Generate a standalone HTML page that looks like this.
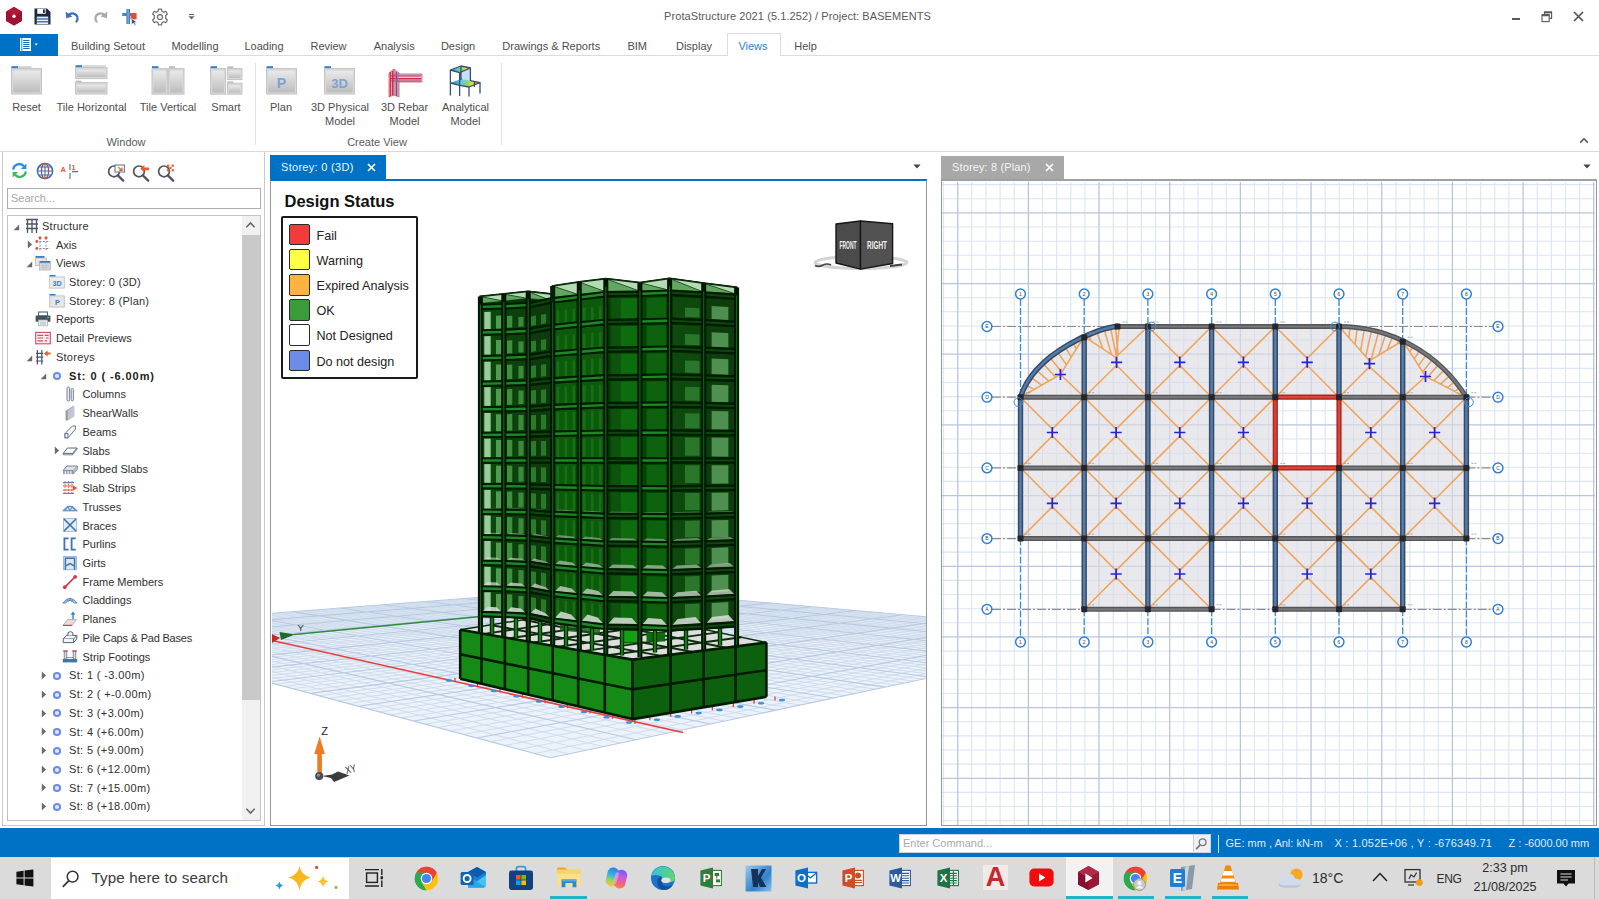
<!DOCTYPE html>
<html lang="en"><head><meta charset="utf-8"><title>ProtaStructure 2021 (5.1.252) / Project: BASEMENTS</title>
<style>
*{box-sizing:border-box;margin:0;padding:0}
html,body{width:1599px;height:899px;overflow:hidden;background:#fff}
body{font-family:"Liberation Sans",sans-serif;font-size:11px;color:#3c3c3c}
#app{position:relative;width:1599px;height:899px;overflow:hidden;background:#fff}
.a{position:absolute}
.t{position:absolute;white-space:nowrap;line-height:1}
svg{position:absolute;overflow:visible}

</style></head>
<body>
<div id="app">
<!-- titlebar -->
<svg style="left:5px;top:7px" width="18" height="19" viewBox="0 0 18 19">
<path d="M9 0.8 L16.2 4.9 L16.2 13.6 L9 17.8 L1.8 13.6 L1.8 4.9 Z" fill="#a3102f" stroke="#a3102f" stroke-width="1.6" stroke-linejoin="round"/>
<path d="M9 0.8 L16.2 4.9 L9 9.3 L1.8 4.9Z" fill="#b8203c" opacity=".55"/>
<circle cx="9" cy="9.3" r="1.7" fill="#fff"/></svg>
<svg style="left:34px;top:8px" width="17" height="17" viewBox="0 0 17 17">
<path d="M0.5 0.5 H13 L16.5 4 V16.5 H0.5Z" fill="#1d2740"/>
<rect x="3.3" y="0.8" width="8.4" height="5" fill="#fff"/><rect x="9" y="1.4" width="1.8" height="3.6" fill="#1d2740"/>
<rect x="2.8" y="8.6" width="11.4" height="7.4" fill="#e9eef7"/>
<rect x="2.8" y="10.2" width="11.4" height="1.5" fill="#4a78c0"/><rect x="2.8" y="13" width="11.4" height="1.5" fill="#4a78c0"/></svg>
<svg style="left:64px;top:9px" width="17" height="15" viewBox="0 0 17 15">
<path d="M4.2 6.4 C7.5 3.2 12.2 4.2 13.4 8 C13.9 9.8 13.4 11.4 12.4 12.7" fill="none" stroke="#3f6fb6" stroke-width="2.2" stroke-linecap="round"/>
<path d="M1.6 2.6 L2.2 9.2 L8.4 7.6 Z" fill="#3f6fb6"/></svg>
<svg style="left:92px;top:9px" width="17" height="15" viewBox="0 0 17 15">
<path d="M12.8 6.4 C9.5 3.2 4.8 4.2 3.6 8 C3.1 9.8 3.6 11.4 4.6 12.7" fill="none" stroke="#a9a9a9" stroke-width="2.2" stroke-linecap="round"/>
<path d="M15.4 2.6 L14.8 9.2 L8.6 7.6 Z" fill="#a9a9a9"/></svg>
<svg style="left:121px;top:8px" width="18" height="18" viewBox="0 0 18 18">
<rect x="5.4" y="1" width="3.6" height="15" fill="#3d78b8"/><rect x="1.2" y="5" width="12" height="3" fill="#4b86c4"/>
<rect x="9.6" y="5" width="6" height="6.4" fill="#d9503c"/><path d="M10.6 10.6 L10.6 16.6 L12.4 15 L13.8 17.4 L14.8 16.8 L13.5 14.5 L15.8 14.2Z" fill="#2c4f7c" stroke="#fff" stroke-width=".5"/>
<rect x="6.6" y="1" width="1" height="15" fill="#9cc0e6"/></svg>
<svg style="left:151px;top:8px" width="18" height="18" viewBox="-9 -9 18 18">
<g fill="none" stroke="#6f6f6f" stroke-width="1.25" stroke-linejoin="round">
<path d="M-1.5 -7.8 H1.5 L2 -5.6 L3.7 -4.7 L5.8 -5.6 L7.4 -3 L5.7 -1.5 V1.5 L7.4 3 L5.8 5.6 L3.7 4.7 L2 5.6 L1.5 7.8 H-1.5 L-2 5.6 L-3.7 4.7 L-5.8 5.6 L-7.4 3 L-5.7 1.5 V-1.5 L-7.4 -3 L-5.8 -5.6 L-3.7 -4.7 L-2 -5.6 Z"/>
<circle r="2.5"/></g></svg>
<div class="a" style="left:188.6px;top:13.6px;width:5.6px;height:1.2px;background:#666;"></div>
<svg style="left:188px;top:15.6px" width="7" height="4" viewBox="0 0 7 4"><path d="M0.4 0.2 H6.6 L3.5 3.6Z" fill="#666"/></svg>
<span class="t" style="left:797.5px;top:11px;font-size:11px;color:#595959;letter-spacing:0.08px;transform:translateX(-50%);">ProtaStructure 2021 (5.1.252) / Project: BASEMENTS</span>
<div class="a" style="left:1512px;top:17.8px;width:8.4px;height:1.8px;background:#5a5a5a;"></div>
<svg style="left:1541px;top:11px" width="12" height="12" viewBox="0 0 12 12">
<g fill="none" stroke="#5a5a5a" stroke-width="1.1"><path d="M3.4 3 V0.9 H10.6 V7.4 H8.2"/><path d="M3.4 1.7 H10.6" stroke-width="1.4"/><rect x="1" y="3.6" width="7.2" height="7"/><path d="M1 4.5 H8.2" stroke-width="1.5"/></g></svg>
<svg style="left:1573px;top:11px" width="11" height="11" viewBox="0 0 11 11">
<path d="M1 1 L10 10 M10 1 L1 10" stroke="#555" stroke-width="1.7" fill="none"/></svg>
<!-- ribbon -->
<div class="a" style="left:0px;top:33.5px;width:58.3px;height:22.3px;background:#0072c6;"></div>
<svg style="left:19px;top:37px" width="22" height="15" viewBox="0 0 22 15">
<rect x="1" y="1" width="11" height="13" fill="#fff"/><g stroke="#0a6fc4" stroke-width="1"><path d="M4.2 3.5H10.5M4.2 5.5H10.5M4.2 7.5H10.5M4.2 9.5H10.5M4.2 11.5H10.5"/><path d="M2.8 1V14" stroke-width=".8"/></g>
<path d="M15.6 6.6 H18.8 L17.2 8.6Z" fill="#fff"/></svg>
<div class="a" style="left:58px;top:55px;width:1541px;height:1px;background:#dcdcdc;"></div>
<div class="a" style="left:727px;top:33px;width:53.5px;height:23px;background:#fff;border:1px solid #dcdcdc;border-bottom:none;"></div>
<span class="t" style="left:108.0px;top:40.5px;font-size:11px;color:#4d4d4d;transform:translateX(-50%);">Building Setout</span>
<span class="t" style="left:195.0px;top:40.5px;font-size:11px;color:#4d4d4d;transform:translateX(-50%);">Modelling</span>
<span class="t" style="left:264.0px;top:40.5px;font-size:11px;color:#4d4d4d;transform:translateX(-50%);">Loading</span>
<span class="t" style="left:328.5px;top:40.5px;font-size:11px;color:#4d4d4d;transform:translateX(-50%);">Review</span>
<span class="t" style="left:394.25px;top:40.5px;font-size:11px;color:#4d4d4d;transform:translateX(-50%);">Analysis</span>
<span class="t" style="left:458.0px;top:40.5px;font-size:11px;color:#4d4d4d;transform:translateX(-50%);">Design</span>
<span class="t" style="left:551.25px;top:40.5px;font-size:11px;color:#4d4d4d;transform:translateX(-50%);">Drawings &amp; Reports</span>
<span class="t" style="left:637.25px;top:40.5px;font-size:11px;color:#4d4d4d;transform:translateX(-50%);">BIM</span>
<span class="t" style="left:694.0px;top:40.5px;font-size:11px;color:#4d4d4d;transform:translateX(-50%);">Display</span>
<span class="t" style="left:753.0px;top:40.5px;font-size:11px;color:#2f7fcf;transform:translateX(-50%);">Views</span>
<span class="t" style="left:805.5px;top:40.5px;font-size:11px;color:#4d4d4d;transform:translateX(-50%);">Help</span>
<div class="a" style="left:0px;top:151px;width:1599px;height:1px;background:#dadada;"></div>
<div class="a" style="left:254.5px;top:63px;width:1px;height:82px;background:#e1e1e1;"></div>
<div class="a" style="left:500.5px;top:63px;width:1px;height:82px;background:#e1e1e1;"></div>
<span class="t" style="left:126px;top:137px;font-size:11px;color:#5a5a5a;transform:translateX(-50%);">Window</span>
<span class="t" style="left:377px;top:137px;font-size:11px;color:#5a5a5a;transform:translateX(-50%);">Create View</span>
<svg style="left:1579px;top:137px" width="10" height="7" viewBox="0 0 10 7"><path d="M1.2 5.6 L5 1.8 L8.8 5.6" fill="none" stroke="#555" stroke-width="1.6"/></svg>
<span class="t" style="left:26.5px;top:102px;font-size:11px;color:#4d4d4d;transform:translateX(-50%);">Reset</span>
<span class="t" style="left:91.5px;top:102px;font-size:11px;color:#4d4d4d;transform:translateX(-50%);">Tile Horizontal</span>
<span class="t" style="left:168px;top:102px;font-size:11px;color:#4d4d4d;transform:translateX(-50%);">Tile Vertical</span>
<span class="t" style="left:226px;top:102px;font-size:11px;color:#4d4d4d;transform:translateX(-50%);">Smart</span>
<span class="t" style="left:281px;top:102px;font-size:11px;color:#4d4d4d;transform:translateX(-50%);">Plan</span>
<span class="t" style="left:340px;top:102px;font-size:11px;color:#4d4d4d;transform:translateX(-50%);">3D Physical</span>
<span class="t" style="left:340px;top:115.5px;font-size:11px;color:#4d4d4d;transform:translateX(-50%);">Model</span>
<span class="t" style="left:404.5px;top:102px;font-size:11px;color:#4d4d4d;transform:translateX(-50%);">3D Rebar</span>
<span class="t" style="left:404.5px;top:115.5px;font-size:11px;color:#4d4d4d;transform:translateX(-50%);">Model</span>
<span class="t" style="left:465.5px;top:102px;font-size:11px;color:#4d4d4d;transform:translateX(-50%);">Analytical</span>
<span class="t" style="left:465.5px;top:115.5px;font-size:11px;color:#4d4d4d;transform:translateX(-50%);">Model</span>
<svg style="left:10px;top:64px" width="34" height="32" viewBox="0 0 34 32"><defs><linearGradient id="wg" x1="0" y1="0" x2="0" y2="1"><stop offset="0" stop-color="#e9e9e9"/><stop offset="1" stop-color="#bdbdbd"/></linearGradient></defs><rect x="1.5" y="2.2" width="20" height="2.4" fill="#d0d0d0"/><rect x="1.5" y="2.2" width="6.5" height="2.4" fill="#2f7fd0"/><rect x="1.5" y="4.6" width="30" height="25.4" fill="#d9d9d9" stroke="#c4c4c4" stroke-width="1"/><rect x="3.1" y="6.8" width="26.8" height="21.599999999999998" fill="url(#wg)"/></svg>
<svg style="left:74px;top:64px" width="36" height="32" viewBox="0 0 36 32"><rect x="1.5" y="1.2" width="6.5" height="2.4" fill="#2f7fd0"/><rect x="8" y="1.2" width="24" height="2.4" fill="#d6d6d6"/><rect x="1.5" y="3.6" width="31.5" height="11" fill="#d9d9d9" stroke="#c4c4c4" stroke-width="1"/><rect x="3.1" y="5.800000000000001" width="28.3" height="7.2" fill="url(#wg)"/><rect x="1.5" y="16.6" width="6" height="2" fill="#bdbdbd"/><rect x="1.5" y="18.6" width="31.5" height="11.4" fill="#d9d9d9" stroke="#c4c4c4" stroke-width="1"/><rect x="3.1" y="20.8" width="28.3" height="7.6000000000000005" fill="url(#wg)"/></svg>
<svg style="left:150px;top:64px" width="36" height="32" viewBox="0 0 36 32"><rect x="2" y="2.2" width="6.5" height="2.4" fill="#2f7fd0"/><rect x="19" y="2.2" width="6" height="2.2" fill="#bdbdbd"/><rect x="2" y="4.6" width="15.4" height="25.6" fill="#d9d9d9" stroke="#c4c4c4" stroke-width="1"/><rect x="3.6" y="6.8" width="12.2" height="21.8" fill="url(#wg)"/><rect x="18.6" y="4.6" width="15.4" height="25.6" fill="#d9d9d9" stroke="#c4c4c4" stroke-width="1"/><rect x="20.200000000000003" y="6.8" width="12.2" height="21.8" fill="url(#wg)"/></svg>
<svg style="left:208px;top:64px" width="36" height="32" viewBox="0 0 36 32"><rect x="2.5" y="2.2" width="6.5" height="2.4" fill="#2f7fd0"/><rect x="19.4" y="2.4" width="6" height="2" fill="#bdbdbd"/><rect x="2.5" y="4.6" width="15" height="25.6" fill="#d9d9d9" stroke="#c4c4c4" stroke-width="1"/><rect x="4.1" y="6.8" width="11.8" height="21.8" fill="url(#wg)"/><rect x="19.4" y="4.6" width="14.6" height="11" fill="#d9d9d9" stroke="#c4c4c4" stroke-width="1"/><rect x="21.0" y="6.8" width="11.399999999999999" height="7.2" fill="url(#wg)"/><rect x="19.4" y="17.4" width="6" height="1.8" fill="#bdbdbd"/><rect x="19.4" y="19.2" width="14.6" height="11" fill="#d9d9d9" stroke="#c4c4c4" stroke-width="1"/><rect x="21.0" y="21.4" width="11.399999999999999" height="7.2" fill="url(#wg)"/></svg>
<svg style="left:265px;top:64px" width="34" height="32" viewBox="0 0 34 32"><rect x="1.5" y="2.2" width="6.5" height="2.4" fill="#2f7fd0"/><rect x="1.5" y="4.6" width="30" height="25.4" fill="#d9d9d9" stroke="#c4c4c4" stroke-width="1"/><rect x="3.1" y="6.8" width="26.8" height="21.599999999999998" fill="url(#wg)"/><text x="16.5" y="24" font-family="Liberation Sans,sans-serif" font-weight="bold" font-size="14" fill="#7aa3d6" text-anchor="middle">P</text></svg>
<svg style="left:323px;top:64px" width="34" height="32" viewBox="0 0 34 32"><rect x="1.5" y="2.2" width="6.5" height="2.4" fill="#2f7fd0"/><rect x="1.5" y="4.6" width="30" height="25.4" fill="#d9d9d9" stroke="#c4c4c4" stroke-width="1"/><rect x="3.1" y="6.8" width="26.8" height="21.599999999999998" fill="url(#wg)"/><text x="16.5" y="23.6" font-family="Liberation Sans,sans-serif" font-weight="bold" font-size="13" fill="#7aa3d6" text-anchor="middle">3D</text></svg>
<svg style="left:386px;top:64px" width="38" height="34" viewBox="0 0 38 34">
<path d="M3 9 L8 5 L8 31 L3 33 Z" fill="#f3a4ae" stroke="#d2566a" stroke-width=".8"/>
<path d="M8 5 L13 9 L13 33 L8 31Z" fill="#f7c3ca" stroke="#d2566a" stroke-width=".8"/>
<path d="M8 10 L36 10 L36 18 L13 18 Z" fill="#f8c6cc" stroke="#d2566a" stroke-width=".8"/>
<g stroke="#c92c48" stroke-width="1.1"><path d="M5 12H35M5 14.6H35M5 17H35"/><path d="M4.4 8V32M6.6 7V31.6M10.6 8V32"/></g>
<g stroke="#5b8fd0" stroke-width=".9"><path d="M9 11.2H35M9 15.8H35"/><path d="M9.2 7V32M12 9V32"/></g></svg>
<svg style="left:447px;top:63px" width="38" height="36" viewBox="0 0 38 36">
<defs><linearGradient id="rb" x1="0" y1="0" x2="1" y2="0"><stop offset="0" stop-color="#3a6fe0"/><stop offset=".3" stop-color="#3ec6e0"/><stop offset=".55" stop-color="#7fd86a"/><stop offset=".75" stop-color="#f2d84a"/><stop offset="1" stop-color="#e8604a"/></linearGradient></defs>
<path d="M3.4 7 L14 3 L23.4 5 L12.6 9.6Z" fill="url(#rb)"/>
<path d="M3.4 20 L14 16 L33 19.6 L22 24Z" fill="url(#rb)"/>
<path d="M12.6 9.6 L23.4 5 L23.4 17.6 L12.6 21.6Z" fill="#8fc8ee" fill-opacity=".55"/>
<g stroke="#3b4f6c" stroke-width="1.3" fill="none" stroke-linejoin="round"><path d="M3.4 7V32.4M14 3V17M23.4 5V18M12.6 9.6V33M22 24V33.4M33 19.6V30.6M27.4 18.6V24"/>
<path d="M3.4 7L14 3L23.4 5L12.6 9.6Z"/><path d="M3.4 20L12.6 22.4L22 24L33 19.6L23.4 17.6"/></g></svg>
<!-- leftpanel -->
<div class="a" style="left:2px;top:152px;width:1px;height:674px;background:#c9c9c9;"></div>
<div class="a" style="left:264px;top:152px;width:1px;height:674px;background:#c9c9c9;"></div>
<div class="a" style="left:2px;top:825px;width:263px;height:1px;background:#c9c9c9;"></div>
<svg style="left:11px;top:162px" width="17" height="17" viewBox="0 0 17 17">
<path d="M2.2 7.6 A6.2 6.2 0 0 1 13 4.2" fill="none" stroke="#2b8fe0" stroke-width="2.4"/><path d="M15.4 1.4 V7 H9.8Z" fill="#2b8fe0"/>
<path d="M14.8 9.4 A6.2 6.2 0 0 1 4 12.8" fill="none" stroke="#3cb860" stroke-width="2.4"/><path d="M1.6 15.6 V10 H7.2Z" fill="#3cb860"/></svg>
<svg style="left:36px;top:162px" width="18" height="18" viewBox="0 0 18 18">
<circle cx="9" cy="9" r="7.6" fill="#fff" stroke="#3a6fb8" stroke-width="1.5"/>
<ellipse cx="9" cy="9" rx="3.6" ry="7.6" fill="none" stroke="#d8384f" stroke-width="1.2"/>
<path d="M9 1.4V16.6" stroke="#3a9a58" stroke-width="1.2"/><path d="M1.4 9H16.6M2.6 5H15.4M2.6 13H15.4" stroke="#3a6fb8" stroke-width="1.1"/></svg>
<svg style="left:60px;top:161px" width="20" height="20" viewBox="0 0 20 20">
<text x="0.6" y="11" font-family="Liberation Sans,sans-serif" font-weight="bold" font-size="7.4" fill="#e4573d">A</text>
<text x="11.6" y="8.6" font-family="Liberation Sans,sans-serif" font-weight="bold" font-size="7.4" fill="#e4573d">1</text>
<path d="M10 3V9M10 12V18M12 10.6H18" stroke="#5b6d84" stroke-width="1.1"/></svg>
<svg style="left:106.5px;top:163px" width="19" height="19" viewBox="0 0 19 19">
<circle cx="7" cy="8.4" r="5.4" fill="#fff" stroke="#4c5560" stroke-width="1.7"/><path d="M10.8 12.4L16.2 17.6" stroke="#4c5560" stroke-width="2.3" stroke-linecap="round"/><rect x="8" y="2" width="9.4" height="7" fill="#fff" stroke="#5b6d84" stroke-width="1"/><path d="M11.4 4.2L15 7.4M15 4.6V7.4H12.2" stroke="#e4573d" stroke-width="1.2" fill="none"/></svg>
<svg style="left:132px;top:163px" width="19" height="19" viewBox="0 0 19 19">
<circle cx="7" cy="8.4" r="5.4" fill="#fff" stroke="#4c5560" stroke-width="1.7"/><path d="M10.8 12.4L16.2 17.6" stroke="#4c5560" stroke-width="2.3" stroke-linecap="round"/><path d="M8.4 5.8 L12.4 2 V4.4 H17 V7.2 H12.4 V9.6Z" fill="#ee5a2a"/></svg>
<svg style="left:157px;top:163px" width="19" height="19" viewBox="0 0 19 19">
<circle cx="7" cy="8.4" r="5.4" fill="#fff" stroke="#4c5560" stroke-width="1.7"/><path d="M10.8 12.4L16.2 17.6" stroke="#4c5560" stroke-width="2.3" stroke-linecap="round"/><g fill="#ee5a2a"><rect x="10" y="1.6" width="2.2" height="2.2"/><rect x="14.6" y="1.6" width="2.2" height="2.2"/><rect x="12.3" y="3.9" width="2.2" height="2.2"/><rect x="10" y="6.2" width="2.2" height="2.2"/><rect x="14.6" y="6.2" width="2.2" height="2.2"/></g></svg>
<div class="a" style="left:7px;top:188px;width:254px;height:21px;background:#fff;border:1px solid #adadad;"></div>
<span class="t" style="left:11px;top:193px;font-size:11px;color:#a6a6a6;">Search...</span>
<div class="a" style="left:7px;top:215px;width:254px;height:606px;background:#fff;border:1px solid #c3c3c3;"></div>
<div class="a" style="left:241.5px;top:216px;width:18.5px;height:604px;background:#f1f1f1;"></div>
<div class="a" style="left:241.5px;top:234.5px;width:18.5px;height:465px;background:#c9c9c9;"></div>
<svg style="left:245px;top:221px" width="11" height="8" viewBox="0 0 11 8"><path d="M1.4 6.2L5.5 2L9.6 6.2" fill="none" stroke="#666" stroke-width="1.6"/></svg>
<svg style="left:245px;top:807px" width="11" height="8" viewBox="0 0 11 8"><path d="M1.4 1.8L5.5 6L9.6 1.8" fill="none" stroke="#666" stroke-width="1.6"/></svg>
<svg style="left:13px;top:223.5px" width="7" height="7" viewBox="0 0 7 7"><path d="M6.2 0.6V6.2H0.6Z" fill="#6a6a6a"/></svg>
<svg style="left:24px;top:217.6px" width="16" height="16" viewBox="0 0 16 16"><g stroke="#4a5568" stroke-width="1.3" fill="none"><path d="M2 1.5H14M2 6H14M2 10.5H14M3.5 1.5V15M8 1.5V15M12.5 1.5V15"/></g></svg>
<span class="t" style="left:42px;top:220.8px;font-size:11px;color:#2f2f2f;letter-spacing:0.25px;">Structure</span>
<svg style="left:27px;top:240.2px" width="6" height="9" viewBox="0 0 6 9"><path d="M0.8 0.6L5 4.5L0.8 8.4Z" fill="#6a6a6a"/></svg>
<svg style="left:35px;top:236.3px" width="16" height="16" viewBox="0 0 16 16"><g stroke="#7a8aa0" stroke-width="1" stroke-dasharray="2 1.4" fill="none"><path d="M5 2V15M11 2V15M1 5.5H15M1 12.5H15"/></g><g fill="#e0523a"><circle cx="5" cy="1.8" r="1.5"/><circle cx="11" cy="1.8" r="1.5"/><circle cx="1.8" cy="5.5" r="1.4"/><circle cx="1.8" cy="12.5" r="1.4"/></g></svg>
<span class="t" style="left:56px;top:239.5px;font-size:11px;color:#2f2f2f;">Axis</span>
<svg style="left:26px;top:261.0px" width="7" height="7" viewBox="0 0 7 7"><path d="M6.2 0.6V6.2H0.6Z" fill="#6a6a6a"/></svg>
<svg style="left:35px;top:255.1px" width="16" height="16" viewBox="0 0 16 16"><rect x="0.5" y="1" width="9" height="2" fill="#2f7fd0"/><rect x="0.5" y="3" width="11" height="7.6" fill="#e6e6e6" stroke="#b5b5b5" stroke-width=".7"/><rect x="4.5" y="6" width="11" height="2" fill="#2f7fd0"/><rect x="4.5" y="8" width="11" height="7" fill="#d8d8d8" stroke="#b0b0b0" stroke-width=".7"/><path d="M6 10.5H14M6 12.5H14M8 9V14.5M11 9V14.5" stroke="#bcbcbc" stroke-width=".6"/></svg>
<span class="t" style="left:56px;top:258.3px;font-size:11px;color:#2f2f2f;">Views</span>
<svg style="left:49px;top:273.8px" width="16" height="16" viewBox="0 0 16 16"><rect x="0.5" y="1" width="6" height="1.8" fill="#2f7fd0"/><rect x="0.7" y="2.9" width="14.6" height="11.2" fill="#e9eef5" stroke="#b3bccb" stroke-width=".8"/><text x="8" y="11.6" font-family="Liberation Sans,sans-serif" font-weight="bold" font-size="7.2" fill="#3b78c4" text-anchor="middle">3D</text></svg>
<span class="t" style="left:69px;top:277.0px;font-size:11px;color:#2f2f2f;letter-spacing:0.24px;">Storey: 0 (3D)</span>
<svg style="left:49px;top:292.5px" width="16" height="16" viewBox="0 0 16 16"><rect x="0.5" y="1" width="6" height="1.8" fill="#2f7fd0"/><rect x="0.7" y="2.9" width="14.6" height="11.2" fill="#e6e6e6" stroke="#b9b9b9" stroke-width=".8"/><text x="8.4" y="11.8" font-family="Liberation Sans,sans-serif" font-weight="bold" font-size="7.2" fill="#3b78c4" text-anchor="middle">P</text></svg>
<span class="t" style="left:69px;top:295.7px;font-size:11px;color:#2f2f2f;letter-spacing:0.24px;">Storey: 8 (Plan)</span>
<svg style="left:35px;top:311.2px" width="16" height="16" viewBox="0 0 16 16"><rect x="3.6" y="1" width="8.8" height="4" fill="#fff" stroke="#4a5a66" stroke-width="1"/><rect x="0.6" y="4.6" width="14.8" height="6.2" rx="1" fill="#42525e"/><rect x="3.4" y="9" width="9.2" height="5.8" fill="#f0f0f0" stroke="#9aa" stroke-width=".7"/><path d="M5 11.2H11M5 13H11" stroke="#9aa" stroke-width=".7"/><circle cx="13" cy="6.6" r=".8" fill="#7fd36a"/></svg>
<span class="t" style="left:56px;top:314.4px;font-size:11px;color:#2f2f2f;">Reports</span>
<svg style="left:35px;top:330.0px" width="16" height="16" viewBox="0 0 16 16"><rect x="0.7" y="2.4" width="14.6" height="11.4" fill="#fdeff1" stroke="#d8475f" stroke-width="1.1"/><g stroke="#d8475f" stroke-width="1.2"><path d="M2.4 5.4H8M2.4 8H8M2.4 10.8H8M9.6 5.4H13.6M11 8H13.6M9.6 10.8H12"/></g></svg>
<span class="t" style="left:56px;top:333.2px;font-size:11px;color:#2f2f2f;">Detail Previews</span>
<svg style="left:26px;top:354.6px" width="7" height="7" viewBox="0 0 7 7"><path d="M6.2 0.6V6.2H0.6Z" fill="#6a6a6a"/></svg>
<svg style="left:35px;top:348.7px" width="16" height="16" viewBox="0 0 16 16"><g stroke="#4a5568" stroke-width="1.2" fill="none"><path d="M2.4 1V15.5M6.8 1V15.5M1 4.4H8.2M1 8.2H8.2M1 12H8.2"/></g><path d="M9 4.4 L12.6 1.4 V3.4 H15.6 V5.4 H12.6 V7.4Z" fill="#ee5a2a"/></svg>
<span class="t" style="left:56px;top:351.9px;font-size:11px;color:#2f2f2f;letter-spacing:0.24px;">Storeys</span>
<svg style="left:40px;top:373.3px" width="7" height="7" viewBox="0 0 7 7"><path d="M6.2 0.6V6.2H0.6Z" fill="#6a6a6a"/></svg>
<svg style="left:52px;top:371.2px" width="10" height="10" viewBox="0 0 10 10"><circle cx="5" cy="5" r="3.1" fill="#dfe6fb" stroke="#6d8ce8" stroke-width="2"/></svg>
<span class="t" style="left:69px;top:370.6px;font-size:11px;color:#222;font-weight:bold;letter-spacing:0.92px;">St: 0 ( -6.00m)</span>
<svg style="left:62px;top:386.2px" width="16" height="16" viewBox="0 0 16 16"><g fill="#e8edf3" stroke="#6b7686" stroke-width=".9"><rect x="5" y="1" width="2.6" height="14" rx="1.2"/><rect x="9.2" y="2.4" width="2.2" height="12.4" rx="1.1"/></g></svg>
<span class="t" style="left:82.5px;top:389.4px;font-size:11px;color:#2f2f2f;">Columns</span>
<svg style="left:62px;top:404.9px" width="16" height="16" viewBox="0 0 16 16"><path d="M4 6 L11.4 1.2 V10.6 L4 15.2Z" fill="#aeb7c4" stroke="#8591a2" stroke-width=".7"/><path d="M4 6 L5.8 6.8 V15.8 L4 15.2Z" fill="#8e99aa"/><path d="M11.4 1.2 L12.6 2 V11.4 L5.8 15.8 V6.8Z" fill="#c3cad4" opacity=".9"/></svg>
<span class="t" style="left:82.5px;top:408.1px;font-size:11px;color:#2f2f2f;">ShearWalls</span>
<svg style="left:62px;top:423.6px" width="16" height="16" viewBox="0 0 16 16"><g fill="#f4f6f8" stroke="#6b7686" stroke-width="1"><path d="M3 9.6 L10.4 2 H13.4 L13.4 5.2 L6 13.8 H3Z"/><rect x="3" y="9.6" width="3" height="4.2"/></g></svg>
<span class="t" style="left:82.5px;top:426.8px;font-size:11px;color:#2f2f2f;">Beams</span>
<svg style="left:54px;top:446.3px" width="6" height="9" viewBox="0 0 6 9"><path d="M0.8 0.6L5 4.5L0.8 8.4Z" fill="#6a6a6a"/></svg>
<svg style="left:62px;top:442.4px" width="16" height="16" viewBox="0 0 16 16"><path d="M1.2 11.4 L5.4 6 H15 L10.6 11.4Z" fill="#f7f8fa" stroke="#5f6a7a" stroke-width="1"/><path d="M1.2 11.4V12.8H10.6V11.4M10.6 12.8L15 7.2V6" fill="none" stroke="#5f6a7a" stroke-width=".8"/></svg>
<span class="t" style="left:82.5px;top:445.6px;font-size:11px;color:#2f2f2f;">Slabs</span>
<svg style="left:62px;top:461.1px" width="16" height="16" viewBox="0 0 16 16"><path d="M1 9.6 L5 5 H15.4 L11.2 9.6Z" fill="#dfe3e8" stroke="#6b7686" stroke-width=".9"/><g fill="#9aa4b3"><rect x="1" y="9.8" width="1.8" height="3.4"/><rect x="3.8" y="9.8" width="1.8" height="3.4"/><rect x="6.6" y="9.8" width="1.8" height="3.4"/><rect x="9.4" y="9.8" width="1.8" height="3.4"/></g><path d="M11.2 9.6V13L15.4 8.4V5" fill="#b8c0cb" stroke="#6b7686" stroke-width=".6"/></svg>
<span class="t" style="left:82.5px;top:464.3px;font-size:11px;color:#2f2f2f;">Ribbed Slabs</span>
<svg style="left:62px;top:479.8px" width="16" height="16" viewBox="0 0 16 16"><g stroke="#5b84c4" stroke-width="1.1"><path d="M1 2.6H12M1 13.4H12"/></g><g stroke="#e0523a" stroke-width="1.2"><path d="M1 6H11.5M1 10H11.5"/><path d="M3 1V15M6.6 1V15M10 1V15" stroke-width=".9" stroke-dasharray="1.6 1.2"/></g><path d="M11 5.4 L15.6 8 L11 10.6Z" fill="#e0523a"/></svg>
<span class="t" style="left:82.5px;top:483.0px;font-size:11px;color:#2f2f2f;">Slab Strips</span>
<svg style="left:62px;top:498.6px" width="16" height="16" viewBox="0 0 16 16"><path d="M0.8 11.8 Q8 2.6 15.2 11.8 Z" fill="#c9dcf0" stroke="#4b7fb8" stroke-width="1"/><path d="M3 11.8L5.6 7.4L8 11.8L10.4 7.4L13 11.8" fill="none" stroke="#4b7fb8" stroke-width=".9"/></svg>
<span class="t" style="left:82.5px;top:501.8px;font-size:11px;color:#2f2f2f;">Trusses</span>
<svg style="left:62px;top:517.3px" width="16" height="16" viewBox="0 0 16 16"><rect x="1.4" y="1.4" width="13.2" height="13.2" fill="#e3ecf6" stroke="#9db3cf" stroke-width=".8"/><path d="M2 2L14 14M14 2L2 14" stroke="#3f72ae" stroke-width="1.6"/></svg>
<span class="t" style="left:82.5px;top:520.5px;font-size:11px;color:#2f2f2f;">Braces</span>
<svg style="left:62px;top:536.0px" width="16" height="16" viewBox="0 0 16 16"><g fill="none" stroke="#3f72ae" stroke-width="1.8"><path d="M6.6 2.4H2.4V13.6H6.6"/><path d="M13.8 2.4H9.6V13.6H13.8"/></g></svg>
<span class="t" style="left:82.5px;top:539.2px;font-size:11px;color:#2f2f2f;">Purlins</span>
<svg style="left:62px;top:554.7px" width="16" height="16" viewBox="0 0 16 16"><rect x="1.6" y="1.4" width="12.8" height="13.4" fill="#dbe6f3" stroke="#8ea9cb" stroke-width=".8"/><path d="M3.4 14.8V3.2H12.6V14.8M3.4 11.2L8 8.6L12.6 11.2" fill="none" stroke="#3f72ae" stroke-width="1.5"/></svg>
<span class="t" style="left:82.5px;top:557.9px;font-size:11px;color:#2f2f2f;">Girts</span>
<svg style="left:62px;top:573.5px" width="16" height="16" viewBox="0 0 16 16"><path d="M2.6 13.4L13.2 2.8" stroke="#c8324a" stroke-width="1.6"/><circle cx="2.8" cy="13.2" r="1.9" fill="#d8384f"/><circle cx="13.2" cy="2.8" r="1.9" fill="#d8384f"/></svg>
<span class="t" style="left:82.5px;top:576.7px;font-size:11px;color:#2f2f2f;">Frame Members</span>
<svg style="left:62px;top:592.2px" width="16" height="16" viewBox="0 0 16 16"><path d="M0.8 11 Q8 1.6 15.2 11 L12.4 11 Q8 5.8 3.6 11Z" fill="#a9c6e6" stroke="#4b7fb8" stroke-width=".9"/><path d="M5 8.2L6.4 10.2M8 6.4V9M11 8.2L9.6 10.2" stroke="#4b7fb8" stroke-width=".8"/></svg>
<span class="t" style="left:82.5px;top:595.4px;font-size:11px;color:#2f2f2f;">Claddings</span>
<svg style="left:62px;top:610.9px" width="16" height="16" viewBox="0 0 16 16"><path d="M1 14.4 L5.4 8.6 H14.4 L10 14.4Z" fill="#e9d9dc" stroke="#a8a0a8" stroke-width=".8"/><path d="M1 14.4H10" stroke="#d8384f" stroke-width="1.1"/><path d="M11 8V2.6" stroke="#2f7fd0" stroke-width="1.4"/><path d="M8.6 3.8L11 0.4L13.4 3.8Z" fill="#2f7fd0"/></svg>
<span class="t" style="left:82.5px;top:614.1px;font-size:11px;color:#2f2f2f;">Planes</span>
<svg style="left:62px;top:629.7px" width="16" height="16" viewBox="0 0 16 16"><g fill="#f4f6f8" stroke="#566172" stroke-width="1"><path d="M1.2 9 L4.4 5.4 H14.8 L11.6 9Z"/><path d="M1.2 9V12.6H11.6V9M11.6 12.6L14.8 9V5.4"/><path d="M6 5.4V2.6 Q8.4 0.6 10.8 2.6 V5.4" /></g></svg>
<span class="t" style="left:82.5px;top:632.9px;font-size:11px;color:#2f2f2f;letter-spacing:-0.2px;">Pile Caps &amp; Pad Bases</span>
<svg style="left:62px;top:648.4px" width="16" height="16" viewBox="0 0 16 16"><rect x="0.8" y="11" width="14.4" height="3.4" fill="#3f72ae"/><g fill="#d9dee6" stroke="#6b7686" stroke-width=".8"><rect x="2.2" y="3" width="2.6" height="8"/><rect x="11.2" y="3" width="2.6" height="8"/></g><path d="M1 3H6M10 3H15" stroke="#c8324a" stroke-width="1.2"/><path d="M4.8 9.6H11.2" stroke="#6b7686" stroke-width=".8"/></svg>
<span class="t" style="left:82.5px;top:651.6px;font-size:11px;color:#2f2f2f;">Strip Footings</span>
<svg style="left:41px;top:671.0px" width="6" height="9" viewBox="0 0 6 9"><path d="M0.8 0.6L5 4.5L0.8 8.4Z" fill="#6a6a6a"/></svg>
<svg style="left:52px;top:670.9px" width="10" height="10" viewBox="0 0 10 10"><circle cx="5" cy="5" r="3.1" fill="#dfe6fb" stroke="#6d8ce8" stroke-width="2"/></svg>
<span class="t" style="left:69px;top:670.3px;font-size:11px;color:#2f2f2f;letter-spacing:0.36px;">St: 1 ( -3.00m)</span>
<svg style="left:41px;top:689.8px" width="6" height="9" viewBox="0 0 6 9"><path d="M0.8 0.6L5 4.5L0.8 8.4Z" fill="#6a6a6a"/></svg>
<svg style="left:52px;top:689.6px" width="10" height="10" viewBox="0 0 10 10"><circle cx="5" cy="5" r="3.1" fill="#dfe6fb" stroke="#6d8ce8" stroke-width="2"/></svg>
<span class="t" style="left:69px;top:689.0px;font-size:11px;color:#2f2f2f;letter-spacing:0.36px;">St: 2 ( +-0.00m)</span>
<svg style="left:41px;top:708.5px" width="6" height="9" viewBox="0 0 6 9"><path d="M0.8 0.6L5 4.5L0.8 8.4Z" fill="#6a6a6a"/></svg>
<svg style="left:52px;top:708.4px" width="10" height="10" viewBox="0 0 10 10"><circle cx="5" cy="5" r="3.1" fill="#dfe6fb" stroke="#6d8ce8" stroke-width="2"/></svg>
<span class="t" style="left:69px;top:707.8px;font-size:11px;color:#2f2f2f;letter-spacing:0.36px;">St: 3 (+3.00m)</span>
<svg style="left:41px;top:727.2px" width="6" height="9" viewBox="0 0 6 9"><path d="M0.8 0.6L5 4.5L0.8 8.4Z" fill="#6a6a6a"/></svg>
<svg style="left:52px;top:727.1px" width="10" height="10" viewBox="0 0 10 10"><circle cx="5" cy="5" r="3.1" fill="#dfe6fb" stroke="#6d8ce8" stroke-width="2"/></svg>
<span class="t" style="left:69px;top:726.5px;font-size:11px;color:#2f2f2f;letter-spacing:0.36px;">St: 4 (+6.00m)</span>
<svg style="left:41px;top:745.9px" width="6" height="9" viewBox="0 0 6 9"><path d="M0.8 0.6L5 4.5L0.8 8.4Z" fill="#6a6a6a"/></svg>
<svg style="left:52px;top:745.8px" width="10" height="10" viewBox="0 0 10 10"><circle cx="5" cy="5" r="3.1" fill="#dfe6fb" stroke="#6d8ce8" stroke-width="2"/></svg>
<span class="t" style="left:69px;top:745.2px;font-size:11px;color:#2f2f2f;letter-spacing:0.36px;">St: 5 (+9.00m)</span>
<svg style="left:41px;top:764.7px" width="6" height="9" viewBox="0 0 6 9"><path d="M0.8 0.6L5 4.5L0.8 8.4Z" fill="#6a6a6a"/></svg>
<svg style="left:52px;top:764.6px" width="10" height="10" viewBox="0 0 10 10"><circle cx="5" cy="5" r="3.1" fill="#dfe6fb" stroke="#6d8ce8" stroke-width="2"/></svg>
<span class="t" style="left:69px;top:764.0px;font-size:11px;color:#2f2f2f;letter-spacing:0.36px;">St: 6 (+12.00m)</span>
<svg style="left:41px;top:783.4px" width="6" height="9" viewBox="0 0 6 9"><path d="M0.8 0.6L5 4.5L0.8 8.4Z" fill="#6a6a6a"/></svg>
<svg style="left:52px;top:783.3px" width="10" height="10" viewBox="0 0 10 10"><circle cx="5" cy="5" r="3.1" fill="#dfe6fb" stroke="#6d8ce8" stroke-width="2"/></svg>
<span class="t" style="left:69px;top:782.7px;font-size:11px;color:#2f2f2f;letter-spacing:0.36px;">St: 7 (+15.00m)</span>
<svg style="left:41px;top:802.1px" width="6" height="9" viewBox="0 0 6 9"><path d="M0.8 0.6L5 4.5L0.8 8.4Z" fill="#6a6a6a"/></svg>
<svg style="left:52px;top:802.0px" width="10" height="10" viewBox="0 0 10 10"><circle cx="5" cy="5" r="3.1" fill="#dfe6fb" stroke="#6d8ce8" stroke-width="2"/></svg>
<span class="t" style="left:69px;top:801.4px;font-size:11px;color:#2f2f2f;letter-spacing:0.36px;">St: 8 (+18.00m)</span>
<!-- view3d -->
<div class="a" style="left:270px;top:155.3px;width:116px;height:24.2px;background:#0072c6;"></div>
<span class="t" style="left:281px;top:162px;font-size:11px;color:#eef5fc;letter-spacing:0.3px;">Storey: 0 (3D)</span>
<svg style="left:367px;top:163px" width="9" height="9" viewBox="0 0 9 9"><path d="M1 1L8 8M8 1L1 8" stroke="#fff" stroke-width="1.7"/></svg>
<svg style="left:913px;top:164px" width="8" height="5" viewBox="0 0 8 5"><path d="M0.4 0.4H7.6L4 4.4Z" fill="#444"/></svg>
<div class="a" style="left:270px;top:179px;width:657.3px;height:646.5px;background:#fff;border:1.6px solid #959595;border-top:2.5px solid #0072c6;"></div>
<svg style="left:272px;top:181.5px;overflow:hidden" width="654" height="643.0" viewBox="272 181.5 654 643.0">
<path d="M69.0 628.2L600.8 587.6L1132.6 634.4L550.6 757.3Z" fill="#ecf2fa"/>
<path d="M81.8 627.2L568.7 753.5M73.1 629.3L606.7 588.1M94.3 626.3L586.3 749.8M77.2 630.4L612.6 588.6M106.7 625.3L603.5 746.1M81.4 631.5L618.6 589.2M118.9 624.4L620.1 742.6M85.7 632.7L624.6 589.7M142.8 622.6L652.0 735.9M94.4 635.0L637.0 590.8M154.5 621.7L667.2 732.7M98.9 636.2L643.2 591.3M166.0 620.8L682.1 729.5M103.5 637.5L649.6 591.9M177.4 619.9L696.6 726.5M108.2 638.7L656.0 592.5M199.6 618.2L724.5 720.6M117.8 641.3L669.1 593.6M210.5 617.4L737.9 717.8M122.7 642.6L675.8 594.2M221.3 616.6L750.9 715.0M127.7 643.9L682.5 594.8M231.9 615.8L763.7 712.3M132.8 645.3L689.4 595.4M252.7 614.2L788.2 707.1M143.3 648.1L703.3 596.6M262.8 613.4L800.1 704.6M148.7 649.6L710.4 597.2M272.9 612.6L811.6 702.2M154.3 651.1L717.6 597.9M282.8 611.9L822.9 699.8M159.9 652.6L724.9 598.5M302.2 610.4L844.8 695.2M171.5 655.7L739.7 599.8M311.8 609.7L855.3 693.0M177.4 657.3L747.3 600.5M321.2 608.9L865.6 690.8M183.5 658.9L755.0 601.2M330.5 608.2L875.7 688.7M189.8 660.6L762.7 601.8M348.7 606.8L895.2 684.5M202.6 664.0L778.6 603.2M357.6 606.2L904.6 682.5M209.2 665.8L786.7 604.0M366.5 605.5L913.9 680.6M216.0 667.6L794.9 604.7M375.2 604.8L922.9 678.7M222.9 669.5L803.2 605.4M392.3 603.5L940.4 675.0M237.2 673.3L820.1 606.9M400.7 602.9L948.9 673.2M244.6 675.3L828.8 607.7M409.0 602.2L957.3 671.4M252.1 677.3L837.6 608.4M417.2 601.6L965.4 669.7M259.9 679.4L846.5 609.2M433.4 600.4L981.3 666.3M275.9 683.7L864.7 610.8M441.3 599.8L989.0 664.7M284.2 685.9L874.0 611.6M449.1 599.2L996.6 663.1M292.6 688.2L883.4 612.5M456.8 598.6L1004.0 661.6M301.4 690.5L893.0 613.3M472.0 597.4L1018.4 658.5M319.4 695.3L912.6 615.0M479.5 596.9L1025.4 657.0M328.8 697.8L922.6 615.9M486.9 596.3L1032.3 655.6M338.4 700.4L932.8 616.8M494.2 595.7L1039.0 654.2M348.3 703.1L943.1 617.7M508.6 594.6L1052.2 651.4M368.8 708.6L964.2 619.6M515.6 594.1L1058.6 650.0M379.5 711.4L975.0 620.5M522.6 593.6L1064.9 648.7M390.5 714.4L986.0 621.5M529.5 593.0L1071.0 647.4M401.8 717.4L997.1 622.5M543.1 592.0L1083.1 644.9M425.3 723.7L1020.0 624.5M549.8 591.5L1089.0 643.6M437.6 727.0L1031.7 625.5M556.4 591.0L1094.7 642.4M450.3 730.4L1043.6 626.6M563.0 590.5L1100.4 641.2M463.3 733.9L1055.6 627.6M575.8 589.5L1111.5 638.9M490.6 741.2L1080.4 629.8M582.2 589.0L1116.9 637.7M504.9 745.0L1093.1 630.9M588.5 588.5L1122.2 636.6M519.6 749.0L1106.1 632.1M594.7 588.1L1127.4 635.5M534.9 753.1L1119.2 633.2" stroke="#d0dded" stroke-width="1" fill="none"/>
<path d="M69.0 628.2L550.6 757.3M69.0 628.2L600.8 587.6M131.0 623.5L636.2 739.2M90.0 633.8L630.8 590.2M188.6 619.1L710.7 723.5M112.9 640.0L662.5 593.0M242.3 615.0L776.1 709.7M138.0 646.7L696.3 596.0M292.6 611.1L834.0 697.5M165.6 654.1L732.3 599.2M339.6 607.5L885.5 686.6M196.1 662.3L770.6 602.5M383.8 604.2L931.8 676.8M230.0 671.3L811.6 606.2M425.3 601.0L973.4 668.0M267.8 681.5L855.5 610.0M464.5 598.0L1011.2 660.0M310.3 692.9L902.7 614.2M501.4 595.2L1045.6 652.8M358.4 705.8L953.5 618.6M536.4 592.5L1077.1 646.1M413.4 720.5L1008.4 623.5M569.4 590.0L1106.0 640.0M476.8 737.5L1067.9 628.7M600.8 587.6L1132.6 634.4M550.6 757.3L1132.6 634.4" stroke="#b8cae2" stroke-width="1.15" fill="none"/>
<path d="M294 634L480.5 616" stroke="#2e8b3e" stroke-width="1.5"/>
<path d="M272 640L683 732" stroke="#e83c3c" stroke-width="1.6"/>
<path d="M279.5 631.5 L295 634 L281 639.5Z" fill="#1f6a2c"/><path d="M272 633.5L280 637.5L272 642.5Z" fill="#c62828"/>
<text x="297.5" y="630" font-family="Liberation Sans,sans-serif" font-size="9.5" fill="#333">Y</text>
<ellipse cx="449.0" cy="680.0" rx="3.2" ry="1.3" fill="#3f8fe0"/><path d="M455.0 677.5v4" stroke="#e83c3c" stroke-width="1.3"/><ellipse cx="471.5" cy="685.2" rx="3.2" ry="1.3" fill="#3f8fe0"/><path d="M477.5 682.8v4" stroke="#e83c3c" stroke-width="1.3"/><ellipse cx="494.0" cy="690.5" rx="3.2" ry="1.3" fill="#3f8fe0"/><path d="M500.0 688.0v4" stroke="#e83c3c" stroke-width="1.3"/><ellipse cx="516.5" cy="695.8" rx="3.2" ry="1.3" fill="#3f8fe0"/><path d="M522.5 693.2v4" stroke="#e83c3c" stroke-width="1.3"/><ellipse cx="539.0" cy="701.0" rx="3.2" ry="1.3" fill="#3f8fe0"/><path d="M545.0 698.5v4" stroke="#e83c3c" stroke-width="1.3"/><ellipse cx="561.5" cy="706.2" rx="3.2" ry="1.3" fill="#3f8fe0"/><path d="M567.5 703.8v4" stroke="#e83c3c" stroke-width="1.3"/><ellipse cx="584.0" cy="711.5" rx="3.2" ry="1.3" fill="#3f8fe0"/><path d="M590.0 709.0v4" stroke="#e83c3c" stroke-width="1.3"/><ellipse cx="606.5" cy="716.8" rx="3.2" ry="1.3" fill="#3f8fe0"/><path d="M612.5 714.2v4" stroke="#e83c3c" stroke-width="1.3"/><ellipse cx="629.0" cy="722.0" rx="3.2" ry="1.3" fill="#3f8fe0"/><path d="M635.0 719.5v4" stroke="#e83c3c" stroke-width="1.3"/><ellipse cx="656.9" cy="719.2" rx="3.2" ry="1.3" fill="#3f8fe0"/><path d="M649.9 715.7v4" stroke="#e83c3c" stroke-width="1.3"/><ellipse cx="677.7" cy="715.9" rx="3.2" ry="1.3" fill="#3f8fe0"/><path d="M670.7 712.4v4" stroke="#e83c3c" stroke-width="1.3"/><ellipse cx="698.6" cy="712.6" rx="3.2" ry="1.3" fill="#3f8fe0"/><path d="M691.6 709.1v4" stroke="#e83c3c" stroke-width="1.3"/><ellipse cx="719.4" cy="709.4" rx="3.2" ry="1.3" fill="#3f8fe0"/><path d="M712.4 705.9v4" stroke="#e83c3c" stroke-width="1.3"/><ellipse cx="740.3" cy="706.1" rx="3.2" ry="1.3" fill="#3f8fe0"/><path d="M733.3 702.6v4" stroke="#e83c3c" stroke-width="1.3"/><ellipse cx="761.1" cy="702.8" rx="3.2" ry="1.3" fill="#3f8fe0"/><path d="M754.1 699.3v4" stroke="#e83c3c" stroke-width="1.3"/><ellipse cx="782.0" cy="699.5" rx="3.2" ry="1.3" fill="#3f8fe0"/><path d="M775.0 696.0v4" stroke="#e83c3c" stroke-width="1.3"/>
<path d="M460.2 629.3L600 607L766.4 642.1L632.4 659.1Z" fill="#dedede" stroke="#0a300a" stroke-width="1.5"/>
<path d="M484.1 633.4L625.4 612.4M509.5 637.8L649.3 617.4M533.8 642.0L672.1 622.2M558.4 646.3L695.2 627.1M583.1 650.6L718.2 631.9M607.8 654.8L741.3 636.8M557.6 613.8L726.1 647.2M522.7 619.3L692.7 651.5M490.3 624.5L661.5 655.4" stroke="#0c2c0c" stroke-width="1.9" fill="none"/>
<path d="M621 629.5H638V642.5H621Z" fill="#12a012" stroke="#063006" stroke-width="1.2"/><path d="M646.5 632H665V641H646.5Z" fill="#0c6c0c"/><path d="M560 624H600V634L560 630Z" fill="#0d5d0d" fill-opacity=".8"/>
<path d="M480.4 613.6V640.0M503.8 614.2V640.9M528.2 615.4V641.8M552.7 620.2V642.7M579.3 623.2V643.6M605.8 626.2V644.4M639.9 626.8V645.3M669.6 627.7V646.2M703.7 625.9V644.0M736.6 623.8V640.0M492 612V634M516 613V638M540 615V642M566 620V646M592 622V650M622 626V655M655 628V652M686 626V649M720 622V645" stroke="#063006" stroke-width="4.4" fill="none"/>
<path d="M480.4 613.6V640.0M503.8 614.2V640.9M528.2 615.4V641.8M552.7 620.2V642.7M579.3 623.2V643.6M605.8 626.2V644.4M639.9 626.8V645.3M669.6 627.7V646.2M703.7 625.9V644.0M736.6 623.8V640.0M492 612V634M516 613V638M540 615V642M566 620V646M592 622V650M622 626V655M655 628V652M686 626V649M720 622V645" stroke="#1d8a1d" stroke-width="1.6" fill="none"/>
<defs><filter id="soft" x="-5%" y="-5%" width="110%" height="110%"><feGaussianBlur stdDeviation="0.55"/></filter></defs>
<g filter="url(#soft)">
<path d="M480.4 296.0L503.8 293.6L528.2 291.0L552.7 293.8L552.7 285.5L579.3 281.6L605.8 278.2L639.9 282.2L669.6 278.0L703.7 282.8L736.6 287.0L736.6 625.8L703.7 627.9L669.6 629.7L639.9 628.8L605.8 628.2L579.3 625.2L552.7 622.2L528.2 617.4L503.8 616.2L480.4 615.6Z" fill="#063c06" stroke="#021402" stroke-width="2"/>
<path d="M480.4 306.4L503.8 305.8L503.8 331.5L480.4 332.0Z" fill="#094709"/>
<path d="M484.3 311.4L490.7 311.3L490.7 329.0L484.3 329.1Z" fill="#9acb9a"/>
<path d="M496.0 315.2L501.3 315.1L501.3 328.2L496.0 328.3Z" fill="#4f9b4f"/>
<path d="M480.4 332.0L503.8 331.5L503.8 357.2L480.4 357.6Z" fill="#094709"/>
<path d="M484.3 335.8L490.7 335.6L490.7 354.6L484.3 354.7Z" fill="#9acb9a"/>
<path d="M496.0 339.6L501.3 339.5L501.3 353.9L496.0 354.0Z" fill="#4f9b4f"/>
<path d="M480.4 357.6L503.8 357.2L503.8 382.9L480.4 383.2Z" fill="#094709"/>
<path d="M484.3 361.1L490.7 361.0L490.7 380.2L484.3 380.3Z" fill="#9acb9a"/>
<path d="M496.0 364.0L501.3 363.9L501.3 379.6L496.0 379.7Z" fill="#4f9b4f"/>
<path d="M480.4 383.2L503.8 382.9L503.8 408.6L480.4 408.8Z" fill="#094709"/>
<path d="M484.3 386.7L490.7 386.7L490.7 405.9L484.3 405.9Z" fill="#9acb9a"/>
<path d="M496.0 388.4L501.3 388.3L501.3 405.3L496.0 405.3Z" fill="#4f9b4f"/>
<path d="M480.4 408.8L503.8 408.6L503.8 434.3L480.4 434.4Z" fill="#094709"/>
<path d="M484.3 412.4L490.7 412.3L490.7 431.5L484.3 431.6Z" fill="#9acb9a"/>
<path d="M496.0 413.8L501.3 413.8L501.3 431.0L496.0 431.0Z" fill="#4f9b4f"/>
<path d="M480.4 434.4L503.8 434.3L503.8 460.0L480.4 460.0Z" fill="#094709"/>
<path d="M484.3 438.0L490.7 437.9L490.7 457.2L484.3 457.2Z" fill="#9acb9a"/>
<path d="M496.0 439.5L501.3 439.4L501.3 456.7L496.0 456.7Z" fill="#4f9b4f"/>
<path d="M480.4 460.0L503.8 460.0L503.8 485.7L480.4 485.6Z" fill="#094709"/>
<path d="M484.3 463.6L490.7 463.6L490.7 482.8L484.3 482.8Z" fill="#9acb9a"/>
<path d="M496.0 465.1L501.3 465.1L501.3 482.3L496.0 482.3Z" fill="#4f9b4f"/>
<path d="M480.4 485.6L503.8 485.7L503.8 511.4L480.4 511.2Z" fill="#094709"/>
<path d="M484.3 489.2L490.7 489.2L490.7 508.5L484.3 508.4Z" fill="#9acb9a"/>
<path d="M496.0 490.8L501.3 490.8L501.3 508.0L496.0 508.0Z" fill="#4f9b4f"/>
<path d="M480.4 511.2L503.8 511.4L503.8 537.1L480.4 536.8Z" fill="#094709"/>
<path d="M484.3 514.8L490.7 514.9L490.7 534.1L484.3 534.0Z" fill="#9acb9a"/>
<path d="M496.0 516.5L501.3 516.5L501.3 533.7L496.0 533.7Z" fill="#4f9b4f"/>
<path d="M480.4 536.8L503.8 537.1L503.8 562.8L480.4 562.4Z" fill="#094709"/>
<path d="M484.3 540.4L490.7 540.5L490.7 559.8L484.3 559.6Z" fill="#9acb9a"/>
<path d="M496.0 542.1L501.3 542.2L501.3 559.4L496.0 559.3Z" fill="#4f9b4f"/>
<path d="M480.4 562.4L503.8 562.8L503.8 588.5L480.4 588.0Z" fill="#094709"/>
<path d="M484.3 566.1L490.7 566.2L490.7 585.4L484.3 585.3Z" fill="#9acb9a"/>
<path d="M496.0 567.8L501.3 567.9L501.3 585.1L496.0 585.0Z" fill="#4f9b4f"/>
<path d="M480.4 588.0L503.8 588.5L503.8 614.2L480.4 613.6Z" fill="#094709"/>
<path d="M484.3 591.7L490.7 591.8L490.7 611.0L484.3 610.9Z" fill="#9acb9a"/>
<path d="M496.0 593.5L501.3 593.6L501.3 610.8L496.0 610.7Z" fill="#4f9b4f"/>
<path d="M503.8 305.8L528.2 304.6L528.2 330.5L503.8 331.5Z" fill="#084108"/>
<path d="M507.0 315.4L512.3 315.2L512.3 327.0L507.0 327.3Z" fill="#3f8f3f"/>
<path d="M518.4 316.4L523.6 316.2L523.6 326.0L518.4 326.3Z" fill="#3a8a3a"/>
<path d="M503.8 331.5L528.2 330.5L528.2 356.4L503.8 357.2Z" fill="#084108"/>
<path d="M507.0 339.9L512.3 339.7L512.3 352.8L507.0 353.0Z" fill="#3f8f3f"/>
<path d="M518.4 341.0L523.6 340.8L523.6 351.9L518.4 352.1Z" fill="#3a8a3a"/>
<path d="M503.8 357.2L528.2 356.4L528.2 382.3L503.8 382.9Z" fill="#084108"/>
<path d="M507.0 364.3L512.3 364.1L512.3 378.6L507.0 378.7Z" fill="#3f8f3f"/>
<path d="M518.4 365.5L523.6 365.3L523.6 377.8L518.4 377.9Z" fill="#3a8a3a"/>
<path d="M503.8 382.9L528.2 382.3L528.2 408.2L503.8 408.6Z" fill="#084108"/>
<path d="M507.0 388.7L512.3 388.6L512.3 404.3L507.0 404.4Z" fill="#3f8f3f"/>
<path d="M518.4 390.0L523.6 389.9L523.6 403.6L518.4 403.7Z" fill="#3a8a3a"/>
<path d="M503.8 408.6L528.2 408.2L528.2 434.1L503.8 434.3Z" fill="#084108"/>
<path d="M507.0 413.7L512.3 413.6L512.3 430.1L507.0 430.2Z" fill="#3f8f3f"/>
<path d="M518.4 414.6L523.6 414.5L523.6 429.5L518.4 429.5Z" fill="#3a8a3a"/>
<path d="M503.8 434.3L528.2 434.1L528.2 460.0L503.8 460.0Z" fill="#084108"/>
<path d="M507.0 439.4L512.3 439.4L512.3 455.9L507.0 455.9Z" fill="#3f8f3f"/>
<path d="M518.4 440.4L523.6 440.3L523.6 455.3L518.4 455.4Z" fill="#3a8a3a"/>
<path d="M503.8 460.0L528.2 460.0L528.2 485.9L503.8 485.7Z" fill="#084108"/>
<path d="M507.0 465.1L512.3 465.2L512.3 481.6L507.0 481.6Z" fill="#3f8f3f"/>
<path d="M518.4 466.2L523.6 466.2L523.6 481.2L518.4 481.2Z" fill="#3a8a3a"/>
<path d="M503.8 485.7L528.2 485.9L528.2 511.8L503.8 511.4Z" fill="#084108"/>
<path d="M507.0 490.9L512.3 490.9L512.3 507.4L507.0 507.3Z" fill="#3f8f3f"/>
<path d="M518.4 492.0L523.6 492.1L523.6 507.1L518.4 507.0Z" fill="#3a8a3a"/>
<path d="M503.8 511.4L528.2 511.8L528.2 537.7L503.8 537.1Z" fill="#084108"/>
<path d="M507.0 516.6L512.3 516.7L512.3 533.2L507.0 533.1Z" fill="#3f8f3f"/>
<path d="M518.4 517.8L523.6 517.9L523.6 532.9L518.4 532.8Z" fill="#3a8a3a"/>
<path d="M503.8 537.1L528.2 537.7L528.2 563.6L503.8 562.8Z" fill="#084108"/>
<path d="M507.0 542.3L512.3 542.5L512.3 559.0L507.0 558.8Z" fill="#3f8f3f"/>
<path d="M518.4 543.7L523.6 543.8L523.6 558.8L518.4 558.6Z" fill="#3a8a3a"/>
<path d="M503.8 562.8L528.2 563.6L528.2 589.5L503.8 588.5Z" fill="#084108"/>
<path d="M507.0 568.0L512.3 568.2L512.3 584.7L507.0 584.5Z" fill="#3f8f3f"/>
<path d="M518.4 569.5L523.6 569.7L523.6 584.7L518.4 584.5Z" fill="#3a8a3a"/>
<path d="M503.8 588.5L528.2 589.5L528.2 615.4L503.8 614.2Z" fill="#084108"/>
<path d="M507.0 593.8L512.3 594.0L512.3 610.5L507.0 610.2Z" fill="#3f8f3f"/>
<path d="M518.4 595.3L523.6 595.5L523.6 610.5L518.4 610.3Z" fill="#3a8a3a"/>
<path d="M528.2 304.6L552.7 299.8L552.7 326.5L528.2 330.5Z" fill="#073b07"/>
<path d="M530.9 316.0L536.0 315.1L536.0 324.5L530.9 325.4Z" fill="#2c7c2c"/>
<path d="M540.9 314.2L546.1 313.3L546.1 322.8L540.9 323.7Z" fill="#297829"/>
<path d="M528.2 330.5L552.7 326.5L552.7 353.2L528.2 356.4Z" fill="#073b07"/>
<path d="M530.9 340.7L536.0 339.9L536.0 350.7L530.9 351.4Z" fill="#2c7c2c"/>
<path d="M540.9 339.2L546.1 338.4L546.1 349.3L540.9 350.0Z" fill="#297829"/>
<path d="M528.2 356.4L552.7 353.2L552.7 379.9L528.2 382.3Z" fill="#073b07"/>
<path d="M530.9 365.4L536.0 364.8L536.0 376.8L530.9 377.4Z" fill="#2c7c2c"/>
<path d="M540.9 364.2L546.1 363.6L546.1 375.8L540.9 376.3Z" fill="#297829"/>
<path d="M528.2 382.3L552.7 379.9L552.7 406.6L528.2 408.2Z" fill="#073b07"/>
<path d="M530.9 390.1L536.0 389.6L536.0 403.0L530.9 403.3Z" fill="#2c7c2c"/>
<path d="M540.9 389.2L546.1 388.8L546.1 402.3L540.9 402.6Z" fill="#297829"/>
<path d="M528.2 408.2L552.7 406.6L552.7 433.3L528.2 434.1Z" fill="#073b07"/>
<path d="M530.9 414.8L536.0 414.5L536.0 429.1L530.9 429.3Z" fill="#2c7c2c"/>
<path d="M540.9 414.2L546.1 413.9L546.1 428.7L540.9 428.9Z" fill="#297829"/>
<path d="M528.2 434.1L552.7 433.3L552.7 460.0L528.2 460.0Z" fill="#073b07"/>
<path d="M530.9 440.8L536.0 440.6L536.0 455.3L530.9 455.3Z" fill="#2c7c2c"/>
<path d="M540.9 440.5L546.1 440.4L546.1 455.2L540.9 455.3Z" fill="#297829"/>
<path d="M528.2 460.0L552.7 460.0L552.7 486.7L528.2 485.9Z" fill="#073b07"/>
<path d="M530.9 466.8L536.0 466.8L536.0 481.4L530.9 481.3Z" fill="#2c7c2c"/>
<path d="M540.9 466.8L546.1 466.9L546.1 481.7L540.9 481.6Z" fill="#297829"/>
<path d="M528.2 485.9L552.7 486.7L552.7 513.4L528.2 511.8Z" fill="#073b07"/>
<path d="M530.9 492.7L536.0 493.0L536.0 507.6L530.9 507.3Z" fill="#2c7c2c"/>
<path d="M540.9 493.2L546.1 493.4L546.1 508.2L540.9 507.9Z" fill="#297829"/>
<path d="M528.2 511.8L552.7 513.4L552.7 540.1L528.2 537.7Z" fill="#073b07"/>
<path d="M530.9 518.7L536.0 519.1L536.0 533.8L530.9 533.3Z" fill="#2c7c2c"/>
<path d="M540.9 519.5L546.1 519.9L546.1 534.7L540.9 534.2Z" fill="#297829"/>
<path d="M528.2 537.7L552.7 540.1L552.7 566.8L528.2 563.6Z" fill="#073b07"/>
<path d="M530.9 544.7L536.0 545.3L536.0 559.9L530.9 559.3Z" fill="#2c7c2c"/>
<path d="M540.9 545.8L546.1 546.3L546.1 561.2L540.9 560.5Z" fill="#297829"/>
<path d="M528.2 563.6L552.7 566.8L552.7 593.5L528.2 589.5Z" fill="#073b07"/>
<path d="M530.9 570.7L536.0 571.4L536.0 586.1L530.9 585.3Z" fill="#2c7c2c"/>
<path d="M540.9 572.1L546.1 572.8L546.1 587.7L540.9 586.8Z" fill="#297829"/>
<path d="M528.2 589.5L552.7 593.5L552.7 620.2L528.2 615.4Z" fill="#073b07"/>
<path d="M530.9 596.7L536.0 597.6L536.0 612.2L530.9 611.3Z" fill="#2c7c2c"/>
<path d="M540.9 598.4L546.1 599.3L546.1 614.1L540.9 613.2Z" fill="#297829"/>
<path d="M552.7 299.8L579.3 296.8L579.3 324.0L552.7 326.5Z" fill="#074907"/>
<path d="M555.4 302.7L576.6 300.4L576.6 321.5L555.4 323.6Z" fill="#0a5a0a"/>
<path d="M556.4 310.1L559.1 309.8L559.1 322.7L556.4 322.9Z" fill="#157415" fill-opacity="0.8"/>
<path d="M564.4 309.2L567.1 309.0L567.1 321.9L564.4 322.2Z" fill="#157415" fill-opacity="0.8"/>
<path d="M572.4 308.4L575.0 308.1L575.0 321.1L572.4 321.4Z" fill="#157415" fill-opacity="0.8"/>
<path d="M552.7 326.5L579.3 324.0L579.3 351.2L552.7 353.2Z" fill="#074907"/>
<path d="M555.4 329.5L576.6 327.5L576.6 348.7L555.4 350.3Z" fill="#0a5a0a"/>
<path d="M556.4 335.5L559.1 335.3L559.1 349.5L556.4 349.7Z" fill="#157415" fill-opacity="0.8"/>
<path d="M564.4 334.8L567.1 334.6L567.1 348.9L564.4 349.1Z" fill="#157415" fill-opacity="0.8"/>
<path d="M572.4 334.1L575.0 333.9L575.0 348.3L572.4 348.5Z" fill="#157415" fill-opacity="0.8"/>
<path d="M552.7 353.2L579.3 351.2L579.3 378.4L552.7 379.9Z" fill="#074907"/>
<path d="M555.4 356.2L576.6 354.7L576.6 375.8L555.4 377.1Z" fill="#0a5a0a"/>
<path d="M556.4 361.0L559.1 360.8L559.1 376.3L556.4 376.5Z" fill="#157415" fill-opacity="0.8"/>
<path d="M564.4 360.4L567.1 360.2L567.1 375.9L564.4 376.0Z" fill="#157415" fill-opacity="0.8"/>
<path d="M572.4 359.8L575.0 359.7L575.0 375.4L572.4 375.5Z" fill="#157415" fill-opacity="0.8"/>
<path d="M552.7 379.9L579.3 378.4L579.3 405.6L552.7 406.6Z" fill="#074907"/>
<path d="M555.4 383.0L576.6 381.8L576.6 403.0L555.4 403.8Z" fill="#0a5a0a"/>
<path d="M556.4 386.4L559.1 386.2L559.1 403.1L556.4 403.2Z" fill="#157415" fill-opacity="0.8"/>
<path d="M564.4 386.0L567.1 385.8L567.1 402.8L564.4 402.9Z" fill="#157415" fill-opacity="0.8"/>
<path d="M572.4 385.6L575.0 385.4L575.0 402.5L572.4 402.6Z" fill="#157415" fill-opacity="0.8"/>
<path d="M552.7 406.6L579.3 405.6L579.3 432.8L552.7 433.3Z" fill="#074907"/>
<path d="M555.4 409.7L576.6 409.0L576.6 430.1L555.4 430.6Z" fill="#0a5a0a"/>
<path d="M556.4 411.8L559.1 411.7L559.1 430.0L556.4 430.0Z" fill="#157415" fill-opacity="0.8"/>
<path d="M564.4 411.5L567.1 411.5L567.1 429.8L564.4 429.8Z" fill="#157415" fill-opacity="0.8"/>
<path d="M572.4 411.3L575.0 411.2L575.0 429.6L572.4 429.7Z" fill="#157415" fill-opacity="0.8"/>
<path d="M552.7 433.3L579.3 432.8L579.3 460.0L552.7 460.0Z" fill="#074907"/>
<path d="M555.4 436.5L576.6 436.1L576.6 457.3L555.4 457.3Z" fill="#0a5a0a"/>
<path d="M556.4 438.6L559.1 438.5L559.1 456.8L556.4 456.8Z" fill="#157415" fill-opacity="0.8"/>
<path d="M564.4 438.5L567.1 438.4L567.1 456.8L564.4 456.8Z" fill="#157415" fill-opacity="0.8"/>
<path d="M572.4 438.3L575.0 438.3L575.0 456.7L572.4 456.8Z" fill="#157415" fill-opacity="0.8"/>
<path d="M552.7 460.0L579.3 460.0L579.3 487.2L552.7 486.7Z" fill="#074907"/>
<path d="M555.4 463.2L576.6 463.3L576.6 484.4L555.4 484.1Z" fill="#0a5a0a"/>
<path d="M556.4 465.4L559.1 465.4L559.1 483.6L556.4 483.6Z" fill="#157415" fill-opacity="0.8"/>
<path d="M564.4 465.4L567.1 465.4L567.1 483.7L564.4 483.7Z" fill="#157415" fill-opacity="0.8"/>
<path d="M572.4 465.4L575.0 465.4L575.0 483.9L572.4 483.8Z" fill="#157415" fill-opacity="0.8"/>
<path d="M552.7 486.7L579.3 487.2L579.3 514.4L552.7 513.4Z" fill="#074907"/>
<path d="M555.4 490.0L576.6 490.4L576.6 511.6L555.4 510.8Z" fill="#0a5a0a"/>
<path d="M556.4 492.1L559.1 492.2L559.1 510.4L556.4 510.3Z" fill="#157415" fill-opacity="0.8"/>
<path d="M564.4 492.3L567.1 492.4L567.1 510.7L564.4 510.6Z" fill="#157415" fill-opacity="0.8"/>
<path d="M572.4 492.5L575.0 492.5L575.0 511.0L572.4 510.9Z" fill="#157415" fill-opacity="0.8"/>
<path d="M552.7 513.4L579.3 514.4L579.3 541.6L552.7 540.1Z" fill="#074907"/>
<path d="M555.4 516.7L576.6 517.6L576.6 538.7L555.4 537.6Z" fill="#0a5a0a"/>
<path d="M556.4 518.9L559.1 519.0L559.1 537.2L556.4 537.1Z" fill="#157415" fill-opacity="0.8"/>
<path d="M564.4 519.2L567.1 519.3L567.1 537.7L564.4 537.5Z" fill="#157415" fill-opacity="0.8"/>
<path d="M572.4 519.6L575.0 519.7L575.0 538.1L572.4 538.0Z" fill="#157415" fill-opacity="0.8"/>
<path d="M552.7 540.1L579.3 541.6L579.3 568.8L552.7 566.8Z" fill="#074907"/>
<path d="M555.4 543.5L576.6 544.7L576.6 565.9L555.4 564.3Z" fill="#0a5a0a"/>
<path d="M556.4 545.7L559.1 545.8L559.1 564.1L556.4 563.9Z" fill="#157415" fill-opacity="0.8"/>
<path d="M564.4 546.1L567.1 546.3L567.1 564.6L564.4 564.4Z" fill="#157415" fill-opacity="0.8"/>
<path d="M572.4 546.6L575.0 546.8L575.0 565.2L572.4 565.0Z" fill="#157415" fill-opacity="0.8"/>
<path d="M552.7 566.8L579.3 568.8L579.3 596.0L552.7 593.5Z" fill="#074907"/>
<path d="M555.4 570.2L576.6 571.9L576.6 593.0L555.4 591.1Z" fill="#0a5a0a"/>
<path d="M556.4 572.4L559.1 572.6L559.1 590.9L556.4 590.6Z" fill="#157415" fill-opacity="0.8"/>
<path d="M564.4 573.1L567.1 573.3L567.1 591.6L564.4 591.4Z" fill="#157415" fill-opacity="0.8"/>
<path d="M572.4 573.7L575.0 573.9L575.0 592.3L572.4 592.1Z" fill="#157415" fill-opacity="0.8"/>
<path d="M552.7 593.5L579.3 596.0L579.3 623.2L552.7 620.2Z" fill="#074907"/>
<path d="M555.4 597.0L576.6 599.0L576.6 620.2L555.4 617.8Z" fill="#0a5a0a"/>
<path d="M556.4 599.2L559.1 599.5L559.1 617.7L556.4 617.4Z" fill="#157415" fill-opacity="0.8"/>
<path d="M564.4 600.0L567.1 600.2L567.1 618.6L564.4 618.3Z" fill="#157415" fill-opacity="0.8"/>
<path d="M572.4 600.8L575.0 601.0L575.0 619.5L572.4 619.2Z" fill="#157415" fill-opacity="0.8"/>
<path d="M579.3 296.8L605.8 293.8L605.8 321.5L579.3 324.0Z" fill="#064506"/>
<path d="M581.9 299.8L603.1 297.4L603.1 319.0L581.9 321.0Z" fill="#0a5a0a"/>
<path d="M583.0 307.3L585.7 307.0L585.7 320.1L583.0 320.4Z" fill="#157415" fill-opacity="0.8"/>
<path d="M591.0 306.4L593.6 306.2L593.6 319.4L591.0 319.6Z" fill="#157415" fill-opacity="0.8"/>
<path d="M598.9 305.6L601.6 305.3L601.6 318.6L598.9 318.8Z" fill="#157415" fill-opacity="0.8"/>
<path d="M579.3 324.0L605.8 321.5L605.8 349.2L579.3 351.2Z" fill="#064506"/>
<path d="M581.9 327.0L603.1 325.1L603.1 346.6L581.9 348.3Z" fill="#0a5a0a"/>
<path d="M583.0 333.2L585.7 333.0L585.7 347.4L583.0 347.6Z" fill="#157415" fill-opacity="0.8"/>
<path d="M591.0 332.5L593.6 332.3L593.6 346.8L591.0 347.0Z" fill="#157415" fill-opacity="0.8"/>
<path d="M598.9 331.8L601.6 331.6L601.6 346.2L598.9 346.4Z" fill="#157415" fill-opacity="0.8"/>
<path d="M579.3 351.2L605.8 349.2L605.8 376.9L579.3 378.4Z" fill="#064506"/>
<path d="M581.9 354.3L603.1 352.7L603.1 374.3L581.9 375.5Z" fill="#0a5a0a"/>
<path d="M583.0 359.1L585.7 358.9L585.7 374.8L583.0 374.9Z" fill="#157415" fill-opacity="0.8"/>
<path d="M591.0 358.5L593.6 358.4L593.6 374.3L591.0 374.4Z" fill="#157415" fill-opacity="0.8"/>
<path d="M598.9 358.0L601.6 357.8L601.6 373.8L598.9 374.0Z" fill="#157415" fill-opacity="0.8"/>
<path d="M579.3 378.4L605.8 376.9L605.8 404.6L579.3 405.6Z" fill="#064506"/>
<path d="M581.9 381.5L603.1 380.4L603.1 401.9L581.9 402.8Z" fill="#0a5a0a"/>
<path d="M583.0 385.0L585.7 384.9L585.7 402.1L583.0 402.2Z" fill="#157415" fill-opacity="0.8"/>
<path d="M591.0 384.6L593.6 384.5L593.6 401.8L591.0 401.9Z" fill="#157415" fill-opacity="0.8"/>
<path d="M598.9 384.2L601.6 384.0L601.6 401.4L598.9 401.6Z" fill="#157415" fill-opacity="0.8"/>
<path d="M579.3 405.6L605.8 404.6L605.8 432.3L579.3 432.8Z" fill="#064506"/>
<path d="M581.9 408.8L603.1 408.0L603.1 429.6L581.9 430.0Z" fill="#0a5a0a"/>
<path d="M583.0 410.9L585.7 410.8L585.7 429.4L583.0 429.5Z" fill="#157415" fill-opacity="0.8"/>
<path d="M591.0 410.6L593.6 410.6L593.6 429.2L591.0 429.3Z" fill="#157415" fill-opacity="0.8"/>
<path d="M598.9 410.4L601.6 410.3L601.6 429.1L598.9 429.1Z" fill="#157415" fill-opacity="0.8"/>
<path d="M579.3 432.8L605.8 432.3L605.8 460.0L579.3 460.0Z" fill="#064506"/>
<path d="M581.9 436.0L603.1 435.7L603.1 457.2L581.9 457.3Z" fill="#0a5a0a"/>
<path d="M583.0 438.2L585.7 438.1L585.7 456.7L583.0 456.7Z" fill="#157415" fill-opacity="0.8"/>
<path d="M591.0 438.1L593.6 438.0L593.6 456.7L591.0 456.7Z" fill="#157415" fill-opacity="0.8"/>
<path d="M598.9 437.9L601.6 437.9L601.6 456.7L598.9 456.7Z" fill="#157415" fill-opacity="0.8"/>
<path d="M579.3 460.0L605.8 460.0L605.8 487.7L579.3 487.2Z" fill="#064506"/>
<path d="M581.9 463.3L603.1 463.3L603.1 484.9L581.9 484.5Z" fill="#0a5a0a"/>
<path d="M583.0 465.5L585.7 465.5L585.7 484.0L583.0 484.0Z" fill="#157415" fill-opacity="0.8"/>
<path d="M591.0 465.5L593.6 465.5L593.6 484.2L591.0 484.1Z" fill="#157415" fill-opacity="0.8"/>
<path d="M598.9 465.5L601.6 465.5L601.6 484.3L598.9 484.3Z" fill="#157415" fill-opacity="0.8"/>
<path d="M579.3 487.2L605.8 487.7L605.8 515.4L579.3 514.4Z" fill="#064506"/>
<path d="M581.9 490.5L603.1 491.0L603.1 512.5L581.9 511.8Z" fill="#0a5a0a"/>
<path d="M583.0 492.7L585.7 492.8L585.7 511.4L583.0 511.3Z" fill="#157415" fill-opacity="0.8"/>
<path d="M591.0 492.9L593.6 493.0L593.6 511.6L591.0 511.5Z" fill="#157415" fill-opacity="0.8"/>
<path d="M598.9 493.1L601.6 493.1L601.6 511.9L598.9 511.8Z" fill="#157415" fill-opacity="0.8"/>
<path d="M579.3 514.4L605.8 515.4L605.8 543.1L579.3 541.6Z" fill="#064506"/>
<path d="M581.9 517.8L603.1 518.6L603.1 540.2L581.9 539.0Z" fill="#0a5a0a"/>
<path d="M583.0 520.0L585.7 520.1L585.7 538.7L583.0 538.5Z" fill="#157415" fill-opacity="0.8"/>
<path d="M591.0 520.3L593.6 520.4L593.6 539.1L591.0 539.0Z" fill="#157415" fill-opacity="0.8"/>
<path d="M598.9 520.7L601.6 520.8L601.6 539.5L598.9 539.4Z" fill="#157415" fill-opacity="0.8"/>
<path d="M579.3 541.6L605.8 543.1L605.8 570.8L579.3 568.8Z" fill="#064506"/>
<path d="M581.9 545.0L603.1 546.3L603.1 567.8L581.9 566.3Z" fill="#0a5a0a"/>
<path d="M583.0 547.3L585.7 547.4L585.7 566.0L583.0 565.8Z" fill="#157415" fill-opacity="0.8"/>
<path d="M591.0 547.7L593.6 547.9L593.6 566.6L591.0 566.4Z" fill="#157415" fill-opacity="0.8"/>
<path d="M598.9 548.2L601.6 548.4L601.6 567.2L598.9 567.0Z" fill="#157415" fill-opacity="0.8"/>
<path d="M579.3 568.8L605.8 570.8L605.8 598.5L579.3 596.0Z" fill="#064506"/>
<path d="M581.9 572.3L603.1 573.9L603.1 595.5L581.9 593.5Z" fill="#0a5a0a"/>
<path d="M583.0 574.5L585.7 574.7L585.7 593.3L583.0 593.1Z" fill="#157415" fill-opacity="0.8"/>
<path d="M591.0 575.2L593.6 575.4L593.6 594.1L591.0 593.8Z" fill="#157415" fill-opacity="0.8"/>
<path d="M598.9 575.8L601.6 576.0L601.6 594.8L598.9 594.5Z" fill="#157415" fill-opacity="0.8"/>
<path d="M579.3 596.0L605.8 598.5L605.8 626.2L579.3 623.2Z" fill="#064506"/>
<path d="M581.9 599.5L603.1 601.6L603.1 623.1L581.9 620.8Z" fill="#0a5a0a"/>
<path d="M583.0 601.8L585.7 602.1L585.7 620.6L583.0 620.3Z" fill="#157415" fill-opacity="0.8"/>
<path d="M591.0 602.6L593.6 602.8L593.6 621.5L591.0 621.2Z" fill="#157415" fill-opacity="0.8"/>
<path d="M598.9 603.4L601.6 603.6L601.6 622.4L598.9 622.1Z" fill="#157415" fill-opacity="0.8"/>
<path d="M605.8 293.8L639.9 293.2L639.9 321.0L605.8 321.5Z" fill="#064206"/>
<path d="M610.6 297.6L637.9 297.1L637.9 318.3L610.6 318.7Z" fill="#085208"/>
<path d="M620.8 298.0L637.9 297.7L637.9 318.3L620.8 318.5Z" fill="#0c6c0c"/>
<path d="M605.8 321.5L639.9 321.0L639.9 348.8L605.8 349.2Z" fill="#064206"/>
<path d="M610.6 325.3L637.9 324.9L637.9 346.0L610.6 346.4Z" fill="#085208"/>
<path d="M620.8 325.7L637.9 325.5L637.9 346.0L620.8 346.2Z" fill="#0c6c0c"/>
<path d="M605.8 349.2L639.9 348.8L639.9 376.6L605.8 376.9Z" fill="#064206"/>
<path d="M610.6 353.0L637.9 352.7L637.9 373.8L610.6 374.1Z" fill="#085208"/>
<path d="M620.8 353.5L637.9 353.3L637.9 373.8L620.8 374.0Z" fill="#0c6c0c"/>
<path d="M605.8 376.9L639.9 376.6L639.9 404.4L605.8 404.6Z" fill="#064206"/>
<path d="M610.6 380.7L637.9 380.5L637.9 401.6L610.6 401.8Z" fill="#085208"/>
<path d="M620.8 381.2L637.9 381.1L637.9 401.6L620.8 401.7Z" fill="#0c6c0c"/>
<path d="M605.8 404.6L639.9 404.4L639.9 432.2L605.8 432.3Z" fill="#064206"/>
<path d="M610.6 408.5L637.9 408.3L637.9 429.4L610.6 429.5Z" fill="#085208"/>
<path d="M620.8 409.0L637.9 408.9L637.9 429.4L620.8 429.5Z" fill="#0c6c0c"/>
<path d="M605.8 432.3L639.9 432.2L639.9 460.0L605.8 460.0Z" fill="#064206"/>
<path d="M610.6 436.2L637.9 436.1L637.9 457.2L610.6 457.2Z" fill="#085208"/>
<path d="M620.8 436.7L637.9 436.7L637.9 457.2L620.8 457.2Z" fill="#0c6c0c"/>
<path d="M605.8 460.0L639.9 460.0L639.9 487.8L605.8 487.7Z" fill="#064206"/>
<path d="M610.6 463.9L637.9 463.9L637.9 485.0L610.6 484.9Z" fill="#085208"/>
<path d="M620.8 464.4L637.9 464.4L637.9 485.0L620.8 485.0Z" fill="#0c6c0c"/>
<path d="M605.8 487.7L639.9 487.8L639.9 515.6L605.8 515.4Z" fill="#064206"/>
<path d="M610.6 491.6L637.9 491.7L637.9 512.8L610.6 512.7Z" fill="#085208"/>
<path d="M620.8 492.2L637.9 492.2L637.9 512.8L620.8 512.7Z" fill="#0c6c0c"/>
<path d="M605.8 515.4L639.9 515.6L639.9 543.4L605.8 543.1Z" fill="#064206"/>
<path d="M610.6 519.3L637.9 519.5L637.9 540.6L610.6 540.4Z" fill="#085208"/>
<path d="M620.8 519.9L637.9 520.0L637.9 540.6L620.8 540.5Z" fill="#0c6c0c"/>
<path d="M605.8 543.1L639.9 543.4L639.9 571.2L605.8 570.8Z" fill="#064206"/>
<path d="M610.6 547.0L637.9 547.3L637.9 568.4L610.6 568.1Z" fill="#085208"/>
<path d="M620.8 547.7L637.9 547.8L637.9 568.4L620.8 568.2Z" fill="#0c6c0c"/>
<path d="M605.8 570.8L639.9 571.2L639.9 599.0L605.8 598.5Z" fill="#064206"/>
<path d="M610.6 574.7L637.9 575.1L637.9 596.2L610.6 595.8Z" fill="#085208"/>
<path d="M620.8 575.4L637.9 575.6L637.9 596.2L620.8 595.9Z" fill="#0c6c0c"/>
<path d="M605.8 598.5L639.9 599.0L639.9 626.8L605.8 626.2Z" fill="#064206"/>
<path d="M610.6 602.4L637.9 602.9L637.9 624.0L610.6 623.5Z" fill="#085208"/>
<path d="M620.8 603.2L637.9 603.4L637.9 624.0L620.8 623.7Z" fill="#0c6c0c"/>
<path d="M639.9 293.2L669.6 292.3L669.6 320.2L639.9 321.0Z" fill="#064406"/>
<path d="M646.7 297.4L666.0 296.9L666.0 317.5L646.7 318.0Z" fill="#0a620a"/>
<path d="M639.9 321.0L669.6 320.2L669.6 348.2L639.9 348.8Z" fill="#064406"/>
<path d="M646.7 325.3L666.0 324.8L666.0 345.5L646.7 345.9Z" fill="#0a620a"/>
<path d="M639.9 348.8L669.6 348.2L669.6 376.1L639.9 376.6Z" fill="#064406"/>
<path d="M646.7 353.1L666.0 352.7L666.0 373.4L646.7 373.7Z" fill="#0a620a"/>
<path d="M639.9 376.6L669.6 376.1L669.6 404.1L639.9 404.4Z" fill="#064406"/>
<path d="M646.7 381.0L666.0 380.7L666.0 401.3L646.7 401.5Z" fill="#0a620a"/>
<path d="M639.9 404.4L669.6 404.1L669.6 432.1L639.9 432.2Z" fill="#064406"/>
<path d="M646.7 408.8L666.0 408.6L666.0 429.3L646.7 429.4Z" fill="#0a620a"/>
<path d="M639.9 432.2L669.6 432.1L669.6 460.0L639.9 460.0Z" fill="#064406"/>
<path d="M646.7 436.6L666.0 436.5L666.0 457.2L646.7 457.2Z" fill="#0a620a"/>
<path d="M639.9 460.0L669.6 460.0L669.6 487.9L639.9 487.8Z" fill="#064406"/>
<path d="M646.7 464.5L666.0 464.5L666.0 485.1L646.7 485.1Z" fill="#0a620a"/>
<path d="M639.9 487.8L669.6 487.9L669.6 515.9L639.9 515.6Z" fill="#064406"/>
<path d="M646.7 492.3L666.0 492.4L666.0 513.1L646.7 512.9Z" fill="#0a620a"/>
<path d="M639.9 515.6L669.6 515.9L669.6 543.9L639.9 543.4Z" fill="#064406"/>
<path d="M646.7 520.1L666.0 520.3L666.0 541.0L646.7 540.7Z" fill="#0a620a"/>
<path d="M639.9 543.4L669.6 543.9L669.6 571.8L639.9 571.2Z" fill="#064406"/>
<path d="M646.7 548.0L666.0 548.3L666.0 568.9L646.7 568.6Z" fill="#0a620a"/>
<path d="M639.9 571.2L669.6 571.8L669.6 599.8L639.9 599.0Z" fill="#064406"/>
<path d="M646.7 575.8L666.0 576.2L666.0 596.9L646.7 596.4Z" fill="#0a620a"/>
<path d="M639.9 599.0L669.6 599.8L669.6 627.7L639.9 626.8Z" fill="#064406"/>
<path d="M646.7 603.6L666.0 604.1L666.0 624.8L646.7 624.2Z" fill="#0a620a"/>
<path d="M669.6 292.3L703.7 294.1L703.7 321.8L669.6 320.2Z" fill="#063c06"/>
<path d="M673.0 296.4L700.3 297.8L700.3 318.8L673.0 317.6Z" fill="#084808"/>
<path d="M684.9 307.0L699.6 307.7L699.6 317.1L684.9 316.5Z" fill="#2c762c"/>
<path d="M669.6 320.2L703.7 321.8L703.7 349.4L669.6 348.2Z" fill="#063c06"/>
<path d="M673.0 324.3L700.3 325.5L700.3 346.5L673.0 345.5Z" fill="#084808"/>
<path d="M684.9 333.4L699.6 334.0L699.6 344.8L684.9 344.3Z" fill="#2c762c"/>
<path d="M669.6 348.2L703.7 349.4L703.7 377.1L669.6 376.1Z" fill="#063c06"/>
<path d="M673.0 352.2L700.3 353.2L700.3 374.2L673.0 373.4Z" fill="#084808"/>
<path d="M684.9 359.9L699.6 360.3L699.6 372.5L684.9 372.1Z" fill="#2c762c"/>
<path d="M669.6 376.1L703.7 377.1L703.7 404.7L669.6 404.1Z" fill="#063c06"/>
<path d="M673.0 380.1L700.3 380.8L700.3 401.9L673.0 401.4Z" fill="#084808"/>
<path d="M684.9 386.3L699.6 386.6L699.6 400.2L684.9 399.9Z" fill="#2c762c"/>
<path d="M669.6 404.1L703.7 404.7L703.7 432.4L669.6 432.1Z" fill="#063c06"/>
<path d="M673.0 408.1L700.3 408.5L700.3 429.6L673.0 429.3Z" fill="#084808"/>
<path d="M684.9 412.7L699.6 412.9L699.6 427.9L684.9 427.7Z" fill="#2c762c"/>
<path d="M669.6 432.1L703.7 432.4L703.7 460.0L669.6 460.0Z" fill="#063c06"/>
<path d="M673.0 436.0L700.3 436.2L700.3 457.2L673.0 457.2Z" fill="#084808"/>
<path d="M684.9 436.9L699.6 437.0L699.6 455.3L684.9 455.3Z" fill="#2c762c"/>
<path d="M669.6 460.0L703.7 460.0L703.7 487.6L669.6 487.9Z" fill="#063c06"/>
<path d="M673.0 463.9L700.3 463.9L700.3 484.9L673.0 485.1Z" fill="#084808"/>
<path d="M684.9 464.7L699.6 464.7L699.6 482.4L684.9 482.5Z" fill="#2c762c"/>
<path d="M669.6 487.9L703.7 487.6L703.7 515.3L669.6 515.9Z" fill="#063c06"/>
<path d="M673.0 491.8L700.3 491.6L700.3 512.6L673.0 513.0Z" fill="#084808"/>
<path d="M684.9 492.5L699.6 492.4L699.6 509.6L684.9 509.8Z" fill="#2c762c"/>
<path d="M669.6 515.9L703.7 515.3L703.7 543.0L669.6 543.9Z" fill="#063c06"/>
<path d="M673.0 519.7L700.3 519.2L700.3 540.3L673.0 541.0Z" fill="#084808"/>
<path d="M684.9 520.4L699.6 520.1L699.6 536.7L684.9 537.0Z" fill="#2c762c"/>
<path d="M669.6 543.9L703.7 543.0L703.7 570.6L669.6 571.8Z" fill="#063c06"/>
<path d="M673.0 547.7L700.3 546.9L700.3 568.0L673.0 568.9Z" fill="#084808"/>
<path d="M684.9 548.2L699.6 547.8L699.6 563.8L684.9 564.3Z" fill="#2c762c"/>
<path d="M669.6 571.8L703.7 570.6L703.7 598.2L669.6 599.8Z" fill="#063c06"/>
<path d="M673.0 575.6L700.3 574.6L700.3 595.6L673.0 596.8Z" fill="#084808"/>
<path d="M684.9 576.0L699.6 575.5L699.6 591.5L684.9 592.1Z" fill="#2c762c"/>
<path d="M669.6 599.8L703.7 598.2L703.7 625.9L669.6 627.7Z" fill="#063c06"/>
<path d="M673.0 603.5L700.3 602.3L700.3 623.3L673.0 624.7Z" fill="#084808"/>
<path d="M684.9 603.8L699.6 603.1L699.6 619.2L684.9 619.9Z" fill="#2c762c"/>
<path d="M703.7 294.1L736.6 296.2L736.6 323.5L703.7 321.8Z" fill="#073d07"/>
<path d="M711.6 305.6L728.4 306.6L728.4 319.5L711.6 318.6Z" fill="#4f8f4f"/>
<path d="M703.7 321.8L736.6 323.5L736.6 350.8L703.7 349.4Z" fill="#073d07"/>
<path d="M711.6 331.8L728.4 332.6L728.4 346.9L711.6 346.2Z" fill="#4f8f4f"/>
<path d="M703.7 349.4L736.6 350.8L736.6 378.1L703.7 377.1Z" fill="#073d07"/>
<path d="M711.6 358.0L728.4 358.7L728.4 374.3L711.6 373.7Z" fill="#4f8f4f"/>
<path d="M703.7 377.1L736.6 378.1L736.6 405.4L703.7 404.7Z" fill="#073d07"/>
<path d="M711.6 384.2L728.4 384.7L728.4 401.7L711.6 401.3Z" fill="#4f8f4f"/>
<path d="M703.7 404.7L736.6 405.4L736.6 432.7L703.7 432.4Z" fill="#073d07"/>
<path d="M711.6 410.4L728.4 410.7L728.4 429.1L711.6 428.9Z" fill="#4f8f4f"/>
<path d="M703.7 432.4L736.6 432.7L736.6 460.0L703.7 460.0Z" fill="#073d07"/>
<path d="M711.6 437.1L728.4 437.3L728.4 456.2L711.6 456.1Z" fill="#4f8f4f"/>
<path d="M703.7 460.0L736.6 460.0L736.6 487.3L703.7 487.6Z" fill="#073d07"/>
<path d="M711.6 464.7L728.4 464.7L728.4 483.0L711.6 483.2Z" fill="#4f8f4f"/>
<path d="M703.7 487.6L736.6 487.3L736.6 514.6L703.7 515.3Z" fill="#073d07"/>
<path d="M711.6 492.3L728.4 492.0L728.4 509.8L711.6 510.2Z" fill="#4f8f4f"/>
<path d="M703.7 515.3L736.6 514.6L736.6 541.9L703.7 543.0Z" fill="#073d07"/>
<path d="M711.6 519.8L728.4 519.4L728.4 536.7L711.6 537.2Z" fill="#4f8f4f"/>
<path d="M703.7 543.0L736.6 541.9L736.6 569.2L703.7 570.6Z" fill="#073d07"/>
<path d="M711.6 547.4L728.4 546.8L728.4 563.5L711.6 564.2Z" fill="#4f8f4f"/>
<path d="M703.7 570.6L736.6 569.2L736.6 596.5L703.7 598.2Z" fill="#073d07"/>
<path d="M711.6 575.0L728.4 574.2L728.4 590.9L711.6 591.8Z" fill="#4f8f4f"/>
<path d="M703.7 598.2L736.6 596.5L736.6 623.8L703.7 625.9Z" fill="#073d07"/>
<path d="M711.6 602.5L728.4 601.6L728.4 618.3L711.6 619.3Z" fill="#4f8f4f"/>
<path d="M482.9 508.2L501.3 508.4L498.4 507.5L485.8 507.3Z" fill="#d9ddd9" fill-opacity="0.30"/>
<path d="M506.3 508.4L525.7 508.8L522.8 507.9L509.2 507.5Z" fill="#d9ddd9" fill-opacity="0.30"/>
<path d="M530.7 508.8L550.2 510.4L547.3 509.5L533.6 507.9Z" fill="#d9ddd9" fill-opacity="0.30"/>
<path d="M555.2 510.4L576.8 511.4L573.7 510.1L558.3 509.1Z" fill="#d9ddd9" fill-opacity="0.30"/>
<path d="M581.8 511.4L603.3 512.4L600.2 511.1L584.9 510.1Z" fill="#d9ddd9" fill-opacity="0.30"/>
<path d="M608.3 512.4L637.4 512.6L634.3 511.4L611.4 511.1Z" fill="#d9ddd9" fill-opacity="0.30"/>
<path d="M642.4 512.6L667.1 512.9L664.0 511.6L645.5 511.4Z" fill="#d9ddd9" fill-opacity="0.30"/>
<path d="M672.1 512.9L701.2 512.3L698.1 511.0L675.2 511.6Z" fill="#d9ddd9" fill-opacity="0.30"/>
<path d="M706.2 512.3L734.1 511.6L731.0 510.4L709.3 511.0Z" fill="#d9ddd9" fill-opacity="0.30"/>
<path d="M482.9 533.8L501.3 534.1L497.9 532.4L486.3 532.0Z" fill="#d9ddd9" fill-opacity="0.44"/>
<path d="M506.3 534.1L525.7 534.7L522.3 533.0L509.7 532.4Z" fill="#d9ddd9" fill-opacity="0.44"/>
<path d="M530.7 534.7L550.2 537.1L546.8 535.4L534.1 533.0Z" fill="#d9ddd9" fill-opacity="0.44"/>
<path d="M555.2 537.1L576.8 538.6L573.0 536.1L559.0 534.6Z" fill="#d9ddd9" fill-opacity="0.44"/>
<path d="M581.8 538.6L603.3 540.1L599.5 537.6L585.5 536.1Z" fill="#d9ddd9" fill-opacity="0.44"/>
<path d="M608.3 540.1L637.4 540.4L633.6 537.9L612.0 537.6Z" fill="#d9ddd9" fill-opacity="0.44"/>
<path d="M642.4 540.4L667.1 540.9L663.4 538.4L646.1 537.9Z" fill="#d9ddd9" fill-opacity="0.44"/>
<path d="M672.1 540.9L701.2 540.0L697.5 537.5L675.9 538.4Z" fill="#d9ddd9" fill-opacity="0.44"/>
<path d="M706.2 540.0L734.1 538.9L730.4 536.4L710.0 537.5Z" fill="#d9ddd9" fill-opacity="0.44"/>
<path d="M482.9 559.4L501.3 559.8L497.5 557.2L486.7 556.8Z" fill="#d9ddd9" fill-opacity="0.58"/>
<path d="M506.3 559.8L525.7 560.6L521.9 558.0L510.1 557.2Z" fill="#d9ddd9" fill-opacity="0.58"/>
<path d="M530.7 560.6L550.2 563.8L546.4 561.2L534.5 558.0Z" fill="#d9ddd9" fill-opacity="0.58"/>
<path d="M555.2 563.8L576.8 565.8L572.4 562.0L559.6 560.0Z" fill="#d9ddd9" fill-opacity="0.58"/>
<path d="M581.8 565.8L603.3 567.8L598.9 564.0L586.2 562.0Z" fill="#d9ddd9" fill-opacity="0.58"/>
<path d="M608.3 567.8L637.4 568.2L633.0 564.5L612.7 564.0Z" fill="#d9ddd9" fill-opacity="0.58"/>
<path d="M642.4 568.2L667.1 568.8L662.7 565.0L646.8 564.5Z" fill="#d9ddd9" fill-opacity="0.58"/>
<path d="M672.1 568.8L701.2 567.6L696.8 563.9L676.5 565.0Z" fill="#d9ddd9" fill-opacity="0.58"/>
<path d="M706.2 567.6L734.1 566.2L729.7 562.5L710.6 563.9Z" fill="#d9ddd9" fill-opacity="0.58"/>
<path d="M482.9 585.0L501.3 585.5L497.1 582.0L487.1 581.5Z" fill="#d9ddd9" fill-opacity="0.72"/>
<path d="M506.3 585.5L525.7 586.5L521.5 583.0L510.6 582.0Z" fill="#d9ddd9" fill-opacity="0.72"/>
<path d="M530.7 586.5L550.2 590.5L546.0 587.0L535.0 583.0Z" fill="#d9ddd9" fill-opacity="0.72"/>
<path d="M555.2 590.5L576.8 593.0L571.8 588.0L560.2 585.5Z" fill="#d9ddd9" fill-opacity="0.72"/>
<path d="M581.8 593.0L603.3 595.5L598.3 590.5L586.8 588.0Z" fill="#d9ddd9" fill-opacity="0.72"/>
<path d="M608.3 595.5L637.4 596.0L632.4 591.0L613.3 590.5Z" fill="#d9ddd9" fill-opacity="0.72"/>
<path d="M642.4 596.0L667.1 596.8L662.1 591.8L647.4 591.0Z" fill="#d9ddd9" fill-opacity="0.72"/>
<path d="M672.1 596.8L701.2 595.2L696.2 590.2L677.1 591.8Z" fill="#d9ddd9" fill-opacity="0.72"/>
<path d="M706.2 595.2L734.1 593.5L729.1 588.5L711.2 590.2Z" fill="#d9ddd9" fill-opacity="0.72"/>
<path d="M482.9 610.6L501.3 611.2L496.6 606.8L487.6 606.2Z" fill="#d9ddd9" fill-opacity="0.86"/>
<path d="M506.3 611.2L525.7 612.4L521.0 608.0L511.0 606.8Z" fill="#d9ddd9" fill-opacity="0.86"/>
<path d="M530.7 612.4L550.2 617.2L545.5 612.8L535.4 608.0Z" fill="#d9ddd9" fill-opacity="0.86"/>
<path d="M555.2 617.2L576.8 620.2L571.2 614.0L560.8 611.0Z" fill="#d9ddd9" fill-opacity="0.86"/>
<path d="M581.8 620.2L603.3 623.2L597.7 617.0L587.4 614.0Z" fill="#d9ddd9" fill-opacity="0.86"/>
<path d="M608.3 623.2L637.4 623.8L631.8 617.5L613.9 617.0Z" fill="#d9ddd9" fill-opacity="0.86"/>
<path d="M642.4 623.8L667.1 624.7L661.5 618.5L648.0 617.5Z" fill="#d9ddd9" fill-opacity="0.86"/>
<path d="M672.1 624.7L701.2 622.9L695.6 616.6L677.7 618.5Z" fill="#d9ddd9" fill-opacity="0.86"/>
<path d="M706.2 622.9L734.1 620.8L728.5 614.5L711.8 616.6Z" fill="#d9ddd9" fill-opacity="0.86"/>
<path d="M480.4 296.0L503.8 293.6L503.8 300.6L480.4 303.0Z" fill="#b4dcb4" stroke="#0b2c0b" stroke-width="1.4" stroke-linejoin="round"/><path d="M480.4 296.0L503.8 300.6L480.4 303.0Z" fill="#3f8f3f" fill-opacity=".7"/><path d="M480.4 296.0L503.8 300.6" stroke="#0e3a0e" stroke-width=".8"/><path d="M503.8 293.6L528.2 291.0L528.2 298.0L503.8 300.6Z" fill="#b4dcb4" stroke="#0b2c0b" stroke-width="1.4" stroke-linejoin="round"/><path d="M503.8 293.6L528.2 298.0L503.8 300.6Z" fill="#3f8f3f" fill-opacity=".7"/><path d="M503.8 293.6L528.2 298.0" stroke="#0e3a0e" stroke-width=".8"/><path d="M528.2 291.0L552.7 293.8L552.7 300.8L528.2 298.0Z" fill="#b4dcb4" stroke="#0b2c0b" stroke-width="1.4" stroke-linejoin="round"/><path d="M528.2 291.0L552.7 300.8L528.2 298.0Z" fill="#3f8f3f" fill-opacity=".7"/><path d="M528.2 291.0L552.7 300.8" stroke="#0e3a0e" stroke-width=".8"/><path d="M552.7 285.5L579.3 281.6L579.3 294.3L552.7 297.3Z" fill="#b4dcb4" stroke="#0b2c0b" stroke-width="1.4" stroke-linejoin="round"/><path d="M552.7 285.5L579.3 294.3L552.7 297.3Z" fill="#3f8f3f" fill-opacity=".7"/><path d="M552.7 285.5L579.3 294.3" stroke="#0e3a0e" stroke-width=".8"/><path d="M579.3 281.6L605.8 278.2L605.8 291.3L579.3 294.3Z" fill="#b4dcb4" stroke="#0b2c0b" stroke-width="1.4" stroke-linejoin="round"/><path d="M579.3 281.6L605.8 291.3L579.3 294.3Z" fill="#3f8f3f" fill-opacity=".7"/><path d="M579.3 281.6L605.8 291.3" stroke="#0e3a0e" stroke-width=".8"/><path d="M605.8 278.2L639.9 282.2L639.9 290.7L605.8 291.3Z" fill="#b4dcb4" stroke="#0b2c0b" stroke-width="1.4" stroke-linejoin="round"/><path d="M605.8 278.2L639.9 290.7L605.8 291.3Z" fill="#3f8f3f" fill-opacity=".7"/><path d="M605.8 278.2L639.9 290.7" stroke="#0e3a0e" stroke-width=".8"/><path d="M639.9 282.2L669.6 278.0L669.6 289.8L639.9 290.7Z" fill="#b4dcb4" stroke="#0b2c0b" stroke-width="1.4" stroke-linejoin="round"/><path d="M639.9 282.2L669.6 289.8L639.9 290.7Z" fill="#3f8f3f" fill-opacity=".7"/><path d="M639.9 282.2L669.6 289.8" stroke="#0e3a0e" stroke-width=".8"/><path d="M669.6 278.0L703.7 282.8L703.7 291.6L669.6 289.8Z" fill="#b4dcb4" stroke="#0b2c0b" stroke-width="1.4" stroke-linejoin="round"/><path d="M669.6 278.0L703.7 291.6L669.6 289.8Z" fill="#3f8f3f" fill-opacity=".7"/><path d="M669.6 278.0L703.7 291.6" stroke="#0e3a0e" stroke-width=".8"/><path d="M703.7 282.8L736.6 287.0L736.6 293.7L703.7 291.6Z" fill="#b4dcb4" stroke="#0b2c0b" stroke-width="1.4" stroke-linejoin="round"/><path d="M703.7 282.8L736.6 293.7L703.7 291.6Z" fill="#3f8f3f" fill-opacity=".7"/><path d="M703.7 282.8L736.6 293.7" stroke="#0e3a0e" stroke-width=".8"/>
<path d="M480.4 306.4L503.8 305.8L528.2 304.6L552.7 299.8L579.3 296.8L605.8 293.8L639.9 293.2L669.6 292.3L703.7 294.1L736.6 296.2" stroke="#031a03" stroke-width="6.6" fill="none" stroke-linejoin="round"/>
<path d="M482.4 306.4L501.8 305.8M505.8 305.8L526.2 304.6M554.7 299.8L577.3 296.8M581.3 296.8L603.8 293.8M641.9 293.2L667.6 292.3" stroke="#1a8a22" stroke-width="2.4" fill="none"/>
<path d="M530.2 304.6L550.7 299.8M607.8 293.8L637.9 293.2M671.6 292.3L701.7 294.1M705.7 294.1L734.6 296.2" stroke="#0b460b" stroke-width="2" fill="none"/>
<path d="M480.4 332.0L503.8 331.5L528.2 330.5L552.7 326.5L579.3 324.0L605.8 321.5L639.9 321.0L669.6 320.2L703.7 321.8L736.6 323.5" stroke="#031a03" stroke-width="6.6" fill="none" stroke-linejoin="round"/>
<path d="M482.4 332.0L501.8 331.5M505.8 331.5L526.2 330.5M554.7 326.5L577.3 324.0M581.3 324.0L603.8 321.5M641.9 321.0L667.6 320.2" stroke="#1a8a22" stroke-width="2.4" fill="none"/>
<path d="M530.2 330.5L550.7 326.5M607.8 321.5L637.9 321.0M671.6 320.2L701.7 321.8M705.7 321.8L734.6 323.5" stroke="#0b460b" stroke-width="2" fill="none"/>
<path d="M480.4 357.6L503.8 357.2L528.2 356.4L552.7 353.2L579.3 351.2L605.8 349.2L639.9 348.8L669.6 348.2L703.7 349.4L736.6 350.8" stroke="#031a03" stroke-width="6.6" fill="none" stroke-linejoin="round"/>
<path d="M482.4 357.6L501.8 357.2M505.8 357.2L526.2 356.4M554.7 353.2L577.3 351.2M581.3 351.2L603.8 349.2M641.9 348.8L667.6 348.2" stroke="#1a8a22" stroke-width="2.4" fill="none"/>
<path d="M530.2 356.4L550.7 353.2M607.8 349.2L637.9 348.8M671.6 348.2L701.7 349.4M705.7 349.4L734.6 350.8" stroke="#0b460b" stroke-width="2" fill="none"/>
<path d="M480.4 383.2L503.8 382.9L528.2 382.3L552.7 379.9L579.3 378.4L605.8 376.9L639.9 376.6L669.6 376.1L703.7 377.1L736.6 378.1" stroke="#031a03" stroke-width="6.6" fill="none" stroke-linejoin="round"/>
<path d="M482.4 383.2L501.8 382.9M505.8 382.9L526.2 382.3M554.7 379.9L577.3 378.4M581.3 378.4L603.8 376.9M641.9 376.6L667.6 376.1" stroke="#1a8a22" stroke-width="2.4" fill="none"/>
<path d="M530.2 382.3L550.7 379.9M607.8 376.9L637.9 376.6M671.6 376.1L701.7 377.1M705.7 377.1L734.6 378.1" stroke="#0b460b" stroke-width="2" fill="none"/>
<path d="M480.4 408.8L503.8 408.6L528.2 408.2L552.7 406.6L579.3 405.6L605.8 404.6L639.9 404.4L669.6 404.1L703.7 404.7L736.6 405.4" stroke="#031a03" stroke-width="6.6" fill="none" stroke-linejoin="round"/>
<path d="M482.4 408.8L501.8 408.6M505.8 408.6L526.2 408.2M554.7 406.6L577.3 405.6M581.3 405.6L603.8 404.6M641.9 404.4L667.6 404.1" stroke="#1a8a22" stroke-width="2.4" fill="none"/>
<path d="M530.2 408.2L550.7 406.6M607.8 404.6L637.9 404.4M671.6 404.1L701.7 404.7M705.7 404.7L734.6 405.4" stroke="#0b460b" stroke-width="2" fill="none"/>
<path d="M480.4 434.4L503.8 434.3L528.2 434.1L552.7 433.3L579.3 432.8L605.8 432.3L639.9 432.2L669.6 432.1L703.7 432.4L736.6 432.7" stroke="#031a03" stroke-width="6.6" fill="none" stroke-linejoin="round"/>
<path d="M482.4 434.4L501.8 434.3M505.8 434.3L526.2 434.1M554.7 433.3L577.3 432.8M581.3 432.8L603.8 432.3M641.9 432.2L667.6 432.1" stroke="#1a8a22" stroke-width="2.4" fill="none"/>
<path d="M530.2 434.1L550.7 433.3M607.8 432.3L637.9 432.2M671.6 432.1L701.7 432.4M705.7 432.4L734.6 432.7" stroke="#0b460b" stroke-width="2" fill="none"/>
<path d="M480.4 460.0L503.8 460.0L528.2 460.0L552.7 460.0L579.3 460.0L605.8 460.0L639.9 460.0L669.6 460.0L703.7 460.0L736.6 460.0" stroke="#031a03" stroke-width="6.6" fill="none" stroke-linejoin="round"/>
<path d="M482.4 460.0L501.8 460.0M505.8 460.0L526.2 460.0M554.7 460.0L577.3 460.0M581.3 460.0L603.8 460.0M641.9 460.0L667.6 460.0" stroke="#1a8a22" stroke-width="2.4" fill="none"/>
<path d="M530.2 460.0L550.7 460.0M607.8 460.0L637.9 460.0M671.6 460.0L701.7 460.0M705.7 460.0L734.6 460.0" stroke="#0b460b" stroke-width="2" fill="none"/>
<path d="M480.4 485.6L503.8 485.7L528.2 485.9L552.7 486.7L579.3 487.2L605.8 487.7L639.9 487.8L669.6 487.9L703.7 487.6L736.6 487.3" stroke="#031a03" stroke-width="6.6" fill="none" stroke-linejoin="round"/>
<path d="M482.4 485.6L501.8 485.7M505.8 485.7L526.2 485.9M554.7 486.7L577.3 487.2M581.3 487.2L603.8 487.7M641.9 487.8L667.6 487.9" stroke="#1a8a22" stroke-width="2.4" fill="none"/>
<path d="M530.2 485.9L550.7 486.7M607.8 487.7L637.9 487.8M671.6 487.9L701.7 487.6M705.7 487.6L734.6 487.3" stroke="#0b460b" stroke-width="2" fill="none"/>
<path d="M480.4 511.2L503.8 511.4L528.2 511.8L552.7 513.4L579.3 514.4L605.8 515.4L639.9 515.6L669.6 515.9L703.7 515.3L736.6 514.6" stroke="#031a03" stroke-width="6.6" fill="none" stroke-linejoin="round"/>
<path d="M482.4 511.2L501.8 511.4M505.8 511.4L526.2 511.8M554.7 513.4L577.3 514.4M581.3 514.4L603.8 515.4M641.9 515.6L667.6 515.9" stroke="#1a8a22" stroke-width="2.4" fill="none"/>
<path d="M530.2 511.8L550.7 513.4M607.8 515.4L637.9 515.6M671.6 515.9L701.7 515.3M705.7 515.3L734.6 514.6" stroke="#0b460b" stroke-width="2" fill="none"/>
<path d="M480.4 536.8L503.8 537.1L528.2 537.7L552.7 540.1L579.3 541.6L605.8 543.1L639.9 543.4L669.6 543.9L703.7 543.0L736.6 541.9" stroke="#031a03" stroke-width="6.6" fill="none" stroke-linejoin="round"/>
<path d="M482.4 536.8L501.8 537.1M505.8 537.1L526.2 537.7M554.7 540.1L577.3 541.6M581.3 541.6L603.8 543.1M641.9 543.4L667.6 543.9" stroke="#1a8a22" stroke-width="2.4" fill="none"/>
<path d="M530.2 537.7L550.7 540.1M607.8 543.1L637.9 543.4M671.6 543.9L701.7 543.0M705.7 543.0L734.6 541.9" stroke="#0b460b" stroke-width="2" fill="none"/>
<path d="M480.4 562.4L503.8 562.8L528.2 563.6L552.7 566.8L579.3 568.8L605.8 570.8L639.9 571.2L669.6 571.8L703.7 570.6L736.6 569.2" stroke="#031a03" stroke-width="6.6" fill="none" stroke-linejoin="round"/>
<path d="M482.4 562.4L501.8 562.8M505.8 562.8L526.2 563.6M554.7 566.8L577.3 568.8M581.3 568.8L603.8 570.8M641.9 571.2L667.6 571.8" stroke="#1a8a22" stroke-width="2.4" fill="none"/>
<path d="M530.2 563.6L550.7 566.8M607.8 570.8L637.9 571.2M671.6 571.8L701.7 570.6M705.7 570.6L734.6 569.2" stroke="#0b460b" stroke-width="2" fill="none"/>
<path d="M480.4 588.0L503.8 588.5L528.2 589.5L552.7 593.5L579.3 596.0L605.8 598.5L639.9 599.0L669.6 599.8L703.7 598.2L736.6 596.5" stroke="#031a03" stroke-width="6.6" fill="none" stroke-linejoin="round"/>
<path d="M482.4 588.0L501.8 588.5M505.8 588.5L526.2 589.5M554.7 593.5L577.3 596.0M581.3 596.0L603.8 598.5M641.9 599.0L667.6 599.8" stroke="#1a8a22" stroke-width="2.4" fill="none"/>
<path d="M530.2 589.5L550.7 593.5M607.8 598.5L637.9 599.0M671.6 599.8L701.7 598.2M705.7 598.2L734.6 596.5" stroke="#0b460b" stroke-width="2" fill="none"/>
<path d="M480.4 613.6L503.8 614.2L528.2 615.4L552.7 620.2L579.3 623.2L605.8 626.2L639.9 626.8L669.6 627.7L703.7 625.9L736.6 623.8" stroke="#031a03" stroke-width="6.6" fill="none" stroke-linejoin="round"/>
<path d="M482.4 613.6L501.8 614.2M505.8 614.2L526.2 615.4M554.7 620.2L577.3 623.2M581.3 623.2L603.8 626.2M641.9 626.8L667.6 627.7" stroke="#1a8a22" stroke-width="2.4" fill="none"/>
<path d="M530.2 615.4L550.7 620.2M607.8 626.2L637.9 626.8M671.6 627.7L701.7 625.9M705.7 625.9L734.6 623.8" stroke="#0b460b" stroke-width="2" fill="none"/>
<path d="M480.4 296.0V641.2" stroke="#021402" stroke-width="5"/>
<path d="M480.4 304.0V641.2" stroke="#125f1a" stroke-width="1.2"/>
<path d="M503.8 293.6V641.9" stroke="#021402" stroke-width="5"/>
<path d="M503.8 301.6V641.9" stroke="#125f1a" stroke-width="1.2"/>
<path d="M528.2 291.0V643.3" stroke="#021402" stroke-width="5"/>
<path d="M528.2 299.0V643.3" stroke="#125f1a" stroke-width="1.2"/>
<path d="M552.7 285.5V648.9" stroke="#021402" stroke-width="5"/>
<path d="M552.7 293.5V648.9" stroke="#125f1a" stroke-width="1.2"/>
<path d="M579.3 281.6V652.4" stroke="#021402" stroke-width="5"/>
<path d="M579.3 289.6V652.4" stroke="#125f1a" stroke-width="1.2"/>
<path d="M605.8 278.2V655.9" stroke="#021402" stroke-width="5"/>
<path d="M605.8 286.2V655.9" stroke="#125f1a" stroke-width="1.2"/>
<path d="M639.9 282.2V656.6" stroke="#021402" stroke-width="5"/>
<path d="M639.9 290.2V656.6" stroke="#125f1a" stroke-width="1.2"/>
<path d="M669.6 278.0V657.6" stroke="#021402" stroke-width="5"/>
<path d="M669.6 286.0V657.6" stroke="#125f1a" stroke-width="1.2"/>
<path d="M703.7 282.8V655.5" stroke="#021402" stroke-width="5"/>
<path d="M703.7 290.8V655.5" stroke="#125f1a" stroke-width="1.2"/>
<path d="M736.6 287.0V653.1" stroke="#021402" stroke-width="5"/>
<path d="M736.6 295.0V653.1" stroke="#125f1a" stroke-width="1.2"/>
<path d="M552.7 285.5V301.8" stroke="#042404" stroke-width="3"/>
<path d="M460.2 629.3L632.4 659.1L632.4 718.6L460.2 678.2Z" fill="#138a13"/>
<path d="M632.4 659.1L766.4 642.1L766.4 696.3L632.4 718.6Z" fill="#0d610d"/>
<path d="M460.2 629.3V678.2M481.5 633.0V683.2M504.9 637.0V688.7M528.2 641.1V694.2M552.7 645.3V699.9M578.2 649.7V705.9M604.8 654.3V712.1M632.4 659.1V718.6M670.7 654.2V712.2M703.7 650.1V706.7M735.6 646.0V701.4M766.4 642.1V696.3M460.2 629.3L632.4 659.1L766.4 642.1M460.2 678.2L632.4 718.6L766.4 696.3M460.2 653.8L632.4 688.9L766.4 669.7" stroke="#031c03" stroke-width="2.6" fill="none" stroke-linejoin="round"/>
</g>
<path d="M319.6 774V752" stroke="#f07a22" stroke-width="4.6"/><path d="M314.3 753.4L319.6 736L324.9 753.4Z" fill="#f07a22"/>
<path d="M322 775.4L332 774L338 771L349.4 775L334 781.4L331 777.4Z" fill="#3c3c3c"/><circle cx="319.2" cy="775.6" r="4.1" fill="#4a4f55"/><circle cx="318.4" cy="774.6" r="1.6" fill="#8a9096"/>
<text x="321.2" y="734.8" font-family="Liberation Sans,sans-serif" font-size="11" fill="#222">Z</text>
<text x="346.6" y="773.4" font-family="Liberation Sans,sans-serif" font-size="10.5" fill="#222" transform="rotate(-16 346.6 773.4)" textLength="10.5" lengthAdjust="spacingAndGlyphs">XY</text>
<ellipse cx="861" cy="262" rx="46" ry="6" fill="none" stroke="#d4d4d4" stroke-width="3"/>
<path d="M815 265 q4 2 8 -0.5 q4 -2 8 0" stroke="#444" stroke-width="1.6" fill="none"/><path d="M890 265.5 l12 -1.5" stroke="#444" stroke-width="2"/>
<path d="M836 223.5L860.5 220.5L860.5 268.6L836 262.5Z" fill="#4b4b4b" stroke="#161616" stroke-width="1.4" stroke-linejoin="round"/>
<path d="M860.5 220.5L892.6 223.2L892.6 263L860.5 268.6Z" fill="#525252" stroke="#161616" stroke-width="1.4" stroke-linejoin="round"/>
<text x="848" y="248.2" font-family="Liberation Sans,sans-serif" font-weight="bold" font-size="10.4" fill="#f2f2f2" text-anchor="middle" textLength="17" lengthAdjust="spacingAndGlyphs">FRONT</text>
<text x="877" y="248.2" font-family="Liberation Sans,sans-serif" font-weight="bold" font-size="10.4" fill="#f2f2f2" text-anchor="middle" textLength="20" lengthAdjust="spacingAndGlyphs">RIGHT</text>
</svg>
<span class="t" style="left:284.5px;top:193px;font-size:16.5px;color:#111;font-weight:bold;">Design Status</span>
<div class="a" style="left:280.5px;top:216px;width:137.5px;height:162.5px;background:#fff;border:2px solid #1a1a1a;border-radius:2px;"></div>
<div class="a" style="left:289.2px;top:224.3px;width:21.2px;height:21.2px;background:#f23b3b;border:1.3px solid #2a2a2a;border-radius:2px;"></div>
<span class="t" style="left:316.5px;top:230.3px;font-size:12.6px;color:#222;">Fail</span>
<div class="a" style="left:289.2px;top:249.3px;width:21.2px;height:21.2px;background:#ffff45;border:1.3px solid #2a2a2a;border-radius:2px;"></div>
<span class="t" style="left:316.5px;top:255.3px;font-size:12.6px;color:#222;">Warning</span>
<div class="a" style="left:289.2px;top:274.4px;width:21.2px;height:21.2px;background:#ffb33f;border:1.3px solid #2a2a2a;border-radius:2px;"></div>
<span class="t" style="left:316.5px;top:280.4px;font-size:12.6px;color:#222;">Expired Analysis</span>
<div class="a" style="left:289.2px;top:299.4px;width:21.2px;height:21.2px;background:#3a9b3a;border:1.3px solid #2a2a2a;border-radius:2px;"></div>
<span class="t" style="left:316.5px;top:305.4px;font-size:12.6px;color:#222;">OK</span>
<div class="a" style="left:289.2px;top:324.4px;width:21.2px;height:21.2px;background:#ffffff;border:1.3px solid #2a2a2a;border-radius:2px;"></div>
<span class="t" style="left:316.5px;top:330.4px;font-size:12.6px;color:#222;">Not Designed</span>
<div class="a" style="left:289.2px;top:349.5px;width:21.2px;height:21.2px;background:#6b8be6;border:1.3px solid #2a2a2a;border-radius:2px;"></div>
<span class="t" style="left:316.5px;top:355.5px;font-size:12.6px;color:#222;">Do not design</span>
<!-- viewplan -->
<div class="a" style="left:940.5px;top:155.5px;width:123.5px;height:24px;background:#a8a8a8;"></div>
<span class="t" style="left:952px;top:162px;font-size:11px;color:#f4f4f4;letter-spacing:0.13px;">Storey: 8 (Plan)</span>
<svg style="left:1045px;top:163px" width="9" height="9" viewBox="0 0 9 9"><path d="M1 1L8 8M8 1L1 8" stroke="#fff" stroke-width="1.6"/></svg>
<svg style="left:1583px;top:164px" width="8" height="5" viewBox="0 0 8 5"><path d="M0.4 0.4H7.6L4 4.4Z" fill="#444"/></svg>
<div class="a" style="left:940.5px;top:179px;width:656px;height:646.5px;background:#fff;border:1.6px solid #959595;border-top:2.5px solid #a0a0a0;"></div>
<svg style="left:942px;top:181.5px;overflow:hidden" width="653" height="643.0" viewBox="942 181.5 653 643.0">
<path d="M943.6 181.5V824.5M971.8 181.5V824.5M986.0 181.5V824.5M1000.1 181.5V824.5M1014.2 181.5V824.5M1042.5 181.5V824.5M1056.6 181.5V824.5M1070.8 181.5V824.5M1084.9 181.5V824.5M1113.2 181.5V824.5M1127.3 181.5V824.5M1141.4 181.5V824.5M1155.6 181.5V824.5M1183.8 181.5V824.5M1198.0 181.5V824.5M1212.1 181.5V824.5M1226.2 181.5V824.5M1254.5 181.5V824.5M1268.6 181.5V824.5M1282.8 181.5V824.5M1296.9 181.5V824.5M1325.2 181.5V824.5M1339.3 181.5V824.5M1353.5 181.5V824.5M1367.6 181.5V824.5M1395.9 181.5V824.5M1410.0 181.5V824.5M1424.1 181.5V824.5M1438.3 181.5V824.5M1466.5 181.5V824.5M1480.7 181.5V824.5M1494.8 181.5V824.5M1508.9 181.5V824.5M1537.2 181.5V824.5M1551.3 181.5V824.5M1565.5 181.5V824.5M1579.6 181.5V824.5M942 184.1H1595M942 198.3H1595M942 226.5H1595M942 240.7H1595M942 254.8H1595M942 268.9H1595M942 297.2H1595M942 311.3H1595M942 325.5H1595M942 339.6H1595M942 367.9H1595M942 382.0H1595M942 396.1H1595M942 410.3H1595M942 438.5H1595M942 452.7H1595M942 466.8H1595M942 480.9H1595M942 509.2H1595M942 523.3H1595M942 537.5H1595M942 551.6H1595M942 579.9H1595M942 594.0H1595M942 608.2H1595M942 622.3H1595M942 650.6H1595M942 664.7H1595M942 678.8H1595M942 693.0H1595M942 721.2H1595M942 735.4H1595M942 749.5H1595M942 763.6H1595M942 791.9H1595M942 806.0H1595M942 820.2H1595" stroke="#dce5f3" stroke-width="1.1" fill="none"/>
<path d="M957.7 181.5V824.5M1028.4 181.5V824.5M1099.0 181.5V824.5M1169.7 181.5V824.5M1240.4 181.5V824.5M1311.1 181.5V824.5M1381.7 181.5V824.5M1452.4 181.5V824.5M1523.1 181.5V824.5M1593.7 181.5V824.5M942 212.4H1595M942 283.1H1595M942 353.7H1595M942 424.4H1595M942 495.1H1595M942 565.8H1595M942 636.4H1595M942 707.1H1595M942 777.8H1595" stroke="#b9c5df" stroke-width="1.3" fill="none"/>
<path d="M1020.5 396.7C1034.5 351.3 1101.3 326.0 1117.5 326.0 H1339.0 A149.8 149.8 0 0 1 1466.4 396.7 V538.1 H1402.7 V608.8 H1275.3 V538.1 H1211.6 V608.8 H1084.2 V538.1 H1020.5Z M1275.3 396.7 V467.4 H1339.0 V396.7Z" fill="#dcdce2" fill-opacity=".62" fill-rule="evenodd"/>
<path d="M1020.5 396.7L1052.3 428.6L1084.2 396.7M1020.5 467.4L1052.3 435.5L1084.2 467.4M1052.3 428.6L1052.3 435.5M1020.5 467.4L1052.3 499.2L1084.2 467.4M1020.5 538.1L1052.3 506.2L1084.2 538.1M1052.3 499.2L1052.3 506.2M1084.2 396.7L1116.1 428.6L1147.9 396.7M1084.2 467.4L1116.1 435.5L1147.9 467.4M1116.1 428.6L1116.1 435.5M1084.2 467.4L1116.1 499.2L1147.9 467.4M1084.2 538.1L1116.1 506.2L1147.9 538.1M1116.1 499.2L1116.1 506.2M1084.2 538.1L1116.1 570.0L1147.9 538.1M1084.2 608.8L1116.1 576.9L1147.9 608.8M1116.1 570.0L1116.1 576.9M1147.9 326.0L1179.8 357.8L1211.6 326.0M1147.9 396.7L1179.8 364.9L1211.6 396.7M1179.8 357.8L1179.8 364.9M1147.9 396.7L1179.8 428.5L1211.6 396.7M1147.9 467.4L1179.8 435.6L1211.6 467.4M1179.8 428.5L1179.8 435.6M1147.9 467.4L1179.8 499.2L1211.6 467.4M1147.9 538.1L1179.8 506.3L1211.6 538.1M1179.8 499.2L1179.8 506.3M1147.9 538.1L1179.8 569.9L1211.6 538.1M1147.9 608.8L1179.8 577.0L1211.6 608.8M1179.8 569.9L1179.8 577.0M1211.6 326.0L1243.4 357.9L1275.3 326.0M1211.6 396.7L1243.4 364.8L1275.3 396.7M1243.4 357.9L1243.4 364.8M1211.6 396.7L1243.4 428.6L1275.3 396.7M1211.6 467.4L1243.4 435.5L1275.3 467.4M1243.4 428.6L1243.4 435.5M1211.6 467.4L1243.4 499.2L1275.3 467.4M1211.6 538.1L1243.4 506.2L1275.3 538.1M1243.4 499.2L1243.4 506.2M1275.3 326.0L1307.2 357.9L1339.0 326.0M1275.3 396.7L1307.2 364.8L1339.0 396.7M1307.2 357.9L1307.2 364.8M1275.3 467.4L1307.2 499.2L1339.0 467.4M1275.3 538.1L1307.2 506.2L1339.0 538.1M1307.2 499.2L1307.2 506.2M1275.3 538.1L1307.2 570.0L1339.0 538.1M1275.3 608.8L1307.2 576.9L1339.0 608.8M1307.2 570.0L1307.2 576.9M1339.0 396.7L1370.8 428.6L1402.7 396.7M1339.0 467.4L1370.8 435.5L1402.7 467.4M1370.8 428.6L1370.8 435.5M1339.0 467.4L1370.8 499.2L1402.7 467.4M1339.0 538.1L1370.8 506.2L1402.7 538.1M1370.8 499.2L1370.8 506.2M1339.0 538.1L1370.8 570.0L1402.7 538.1M1339.0 608.8L1370.8 576.9L1402.7 608.8M1370.8 570.0L1370.8 576.9M1402.7 396.7L1434.6 428.6L1466.4 396.7M1402.7 467.4L1434.6 435.5L1466.4 467.4M1434.6 428.6L1434.6 435.5M1402.7 467.4L1434.6 499.2L1466.4 467.4M1402.7 538.1L1434.6 506.2L1466.4 538.1M1434.6 499.2L1434.6 506.2M1020.5 396.7L1060.4 374.0L1084.2 336.0M1060.4 374.0L1084.2 396.7M1023.4 393.0L1025.5 393.8M1027.1 385.1L1034.1 389.0M1031.9 377.6L1041.7 384.7M1037.5 370.6L1048.8 380.6M1043.9 364.1L1055.7 376.7M1050.8 358.0L1061.8 371.7M1058.2 352.5L1066.4 364.3M1065.8 347.5L1071.3 356.6M1073.5 343.1L1076.4 348.5M1081.1 339.1L1081.6 340.2M1084.2 336.0L1115.6 356.8L1147.9 326.0M1084.2 396.7L1116.6 364.8L1147.9 396.7M1115.6 356.8L1116.6 364.8M1089.1 335.5L1091.3 340.7M1097.2 332.4L1102.9 348.4M1104.5 330.0L1111.5 354.1M1110.7 328.4L1116.5 355.9M1115.6 327.6L1118.1 354.4M1119.0 328.0L1116.2 355.8M1339.0 326.0L1369.5 360.2L1402.7 340.2M1339.0 396.7L1369.5 366.2L1402.7 396.7M1369.5 360.2L1369.5 366.2M1342.6 327.5L1342.6 330.0M1349.8 327.9L1349.1 337.4M1357.0 328.6L1355.1 344.1M1364.2 329.7L1360.6 350.3M1371.3 331.1L1365.7 356.0M1378.3 332.8L1371.0 359.3M1385.3 334.9L1378.8 354.6M1392.1 337.3L1387.4 349.4M1398.8 340.1L1397.3 343.5M1402.7 340.2L1425.5 376.0L1466.4 396.7M1425.5 376.0L1402.7 396.7M1405.6 343.3L1405.2 344.1M1412.4 347.0L1409.9 351.5M1419.1 351.0L1414.3 358.4M1425.5 355.4L1418.5 365.1M1431.7 360.1L1422.6 371.4M1437.7 365.1L1427.2 376.9M1443.4 370.4L1433.7 380.2M1448.7 376.1L1440.5 383.6M1453.8 381.9L1447.5 387.1M1458.6 388.1L1454.8 390.9M1463.0 394.5L1462.6 394.8" stroke="#f09c48" stroke-width="1.6" fill="none" stroke-opacity=".88"/>
<path d="M1020.5 298.5V396.7M1020.5 538.1V636.5M1084.2 298.5V336.0M1084.2 608.8V636.5M1147.9 298.5V326.0M1147.9 608.8V636.5M1211.6 298.5V326.0M1211.6 608.8V636.5M1275.3 298.5V326.0M1275.3 608.8V636.5M1339.0 298.5V326.0M1339.0 608.8V636.5M1402.7 298.5V340.2M1402.7 608.8V636.5M1466.4 298.5V396.7M1466.4 538.1V636.5" stroke="#3b8ada" stroke-width="1.3" stroke-dasharray="7 2" fill="none"/>
<path d="M992.0 326.0H1117.5M1339.0 326.0H1493.0M992.0 396.7H1020.5M1466.4 396.7H1493.0M992.0 467.4H1020.5M1466.4 467.4H1493.0M992.0 538.1H1020.5M1466.4 538.1H1493.0M992.0 608.8H1084.2M1402.7 608.8H1493.0M1211.6 608.8H1275.3" stroke="#8c8c8c" stroke-width="1.2" stroke-dasharray="9 2 2 2" fill="none"/>
<path d="M1117.5 326.0H1339.0M1020.5 396.7H1275.3M1339.0 396.7H1466.4M1020.5 467.4H1275.3M1339.0 467.4H1466.4M1020.5 538.1H1466.4M1084.2 608.8H1211.6M1275.3 608.8H1402.7M1339.0 326.0A149.8 149.8 0 0 1 1466.4 396.7" stroke="#555658" stroke-width="5" fill="none"/>
<path d="M1117.5 326.0H1339.0M1020.5 396.7H1275.3M1339.0 396.7H1466.4M1020.5 467.4H1275.3M1339.0 467.4H1466.4M1020.5 538.1H1466.4M1084.2 608.8H1211.6M1275.3 608.8H1402.7M1339.0 326.0A149.8 149.8 0 0 1 1466.4 396.7" stroke="#77777a" stroke-width="2.2" fill="none"/>
<path d="M1020.5 396.7V538.1M1084.2 336.0V608.8M1147.9 326.0V608.8M1211.6 326.0V608.8M1275.3 326.0V396.7M1275.3 467.4V608.8M1339.0 326.0V396.7M1339.0 467.4V608.8M1402.7 340.2V608.8M1466.4 396.7V538.1M1020.5 396.7C1034.5 351.3 1101.3 326.0 1117.5 326.0" stroke="#3c4a5e" stroke-width="5.4" fill="none"/>
<path d="M1020.5 396.7V538.1M1084.2 336.0V608.8M1147.9 326.0V608.8M1211.6 326.0V608.8M1275.3 326.0V396.7M1275.3 467.4V608.8M1339.0 326.0V396.7M1339.0 467.4V608.8M1402.7 340.2V608.8M1466.4 396.7V538.1M1020.5 396.7C1034.5 351.3 1101.3 326.0 1117.5 326.0" stroke="#4f7db4" stroke-width="2.4" fill="none"/>
<path d="M1275.3 396.7H1339.0V467.4H1275.3Z" stroke="#b3261e" stroke-width="5.2" fill="none"/>
<path d="M1275.3 396.7H1339.0V467.4H1275.3Z" stroke="#d2463c" stroke-width="2.2" fill="none"/>
<rect x="1017.5" y="393.7" width="6" height="6" rx="1" fill="#24262c"/><rect x="1017.5" y="464.4" width="6" height="6" rx="1" fill="#24262c"/><rect x="1017.5" y="535.1" width="6" height="6" rx="1" fill="#24262c"/><rect x="1081.2" y="393.7" width="6" height="6" rx="1" fill="#24262c"/><rect x="1081.2" y="464.4" width="6" height="6" rx="1" fill="#24262c"/><rect x="1081.2" y="535.1" width="6" height="6" rx="1" fill="#24262c"/><rect x="1081.2" y="605.8" width="6" height="6" rx="1" fill="#24262c"/><rect x="1144.9" y="323.0" width="6" height="6" rx="1" fill="#24262c"/><rect x="1144.9" y="393.7" width="6" height="6" rx="1" fill="#24262c"/><rect x="1144.9" y="464.4" width="6" height="6" rx="1" fill="#24262c"/><rect x="1144.9" y="535.1" width="6" height="6" rx="1" fill="#24262c"/><rect x="1144.9" y="605.8" width="6" height="6" rx="1" fill="#24262c"/><rect x="1208.6" y="323.0" width="6" height="6" rx="1" fill="#24262c"/><rect x="1208.6" y="393.7" width="6" height="6" rx="1" fill="#24262c"/><rect x="1208.6" y="464.4" width="6" height="6" rx="1" fill="#24262c"/><rect x="1208.6" y="535.1" width="6" height="6" rx="1" fill="#24262c"/><rect x="1208.6" y="605.8" width="6" height="6" rx="1" fill="#24262c"/><rect x="1272.3" y="323.0" width="6" height="6" rx="1" fill="#24262c"/><rect x="1272.3" y="393.7" width="6" height="6" rx="1" fill="#24262c"/><rect x="1272.3" y="464.4" width="6" height="6" rx="1" fill="#24262c"/><rect x="1272.3" y="535.1" width="6" height="6" rx="1" fill="#24262c"/><rect x="1272.3" y="605.8" width="6" height="6" rx="1" fill="#24262c"/><rect x="1336.0" y="323.0" width="6" height="6" rx="1" fill="#24262c"/><rect x="1336.0" y="393.7" width="6" height="6" rx="1" fill="#24262c"/><rect x="1336.0" y="464.4" width="6" height="6" rx="1" fill="#24262c"/><rect x="1336.0" y="535.1" width="6" height="6" rx="1" fill="#24262c"/><rect x="1336.0" y="605.8" width="6" height="6" rx="1" fill="#24262c"/><rect x="1399.7" y="393.7" width="6" height="6" rx="1" fill="#24262c"/><rect x="1399.7" y="464.4" width="6" height="6" rx="1" fill="#24262c"/><rect x="1399.7" y="535.1" width="6" height="6" rx="1" fill="#24262c"/><rect x="1399.7" y="605.8" width="6" height="6" rx="1" fill="#24262c"/><rect x="1463.4" y="393.7" width="6" height="6" rx="1" fill="#24262c"/><rect x="1463.4" y="464.4" width="6" height="6" rx="1" fill="#24262c"/><rect x="1463.4" y="535.1" width="6" height="6" rx="1" fill="#24262c"/><rect x="1081.2" y="334.0" width="6" height="6" rx="1" fill="#24262c"/><rect x="1399.7" y="338.2" width="6" height="6" rx="1" fill="#24262c"/><rect x="1114.5" y="323.0" width="6" height="6" rx="1" fill="#24262c"/>
<path d="M1025.5 392.2h6M1025.5 462.9h6M1025.5 533.6h6M1089.2 392.2h6M1089.2 462.9h6M1089.2 533.6h6M1089.2 604.3h6M1152.9 321.5h6M1152.9 392.2h6M1152.9 462.9h6M1152.9 533.6h6M1152.9 604.3h6M1216.6 321.5h6M1216.6 392.2h6M1216.6 462.9h6M1216.6 533.6h6M1216.6 604.3h6M1280.3 321.5h6M1280.3 392.2h6M1280.3 462.9h6M1280.3 533.6h6M1280.3 604.3h6M1344.0 321.5h6M1344.0 392.2h6M1344.0 462.9h6M1344.0 533.6h6M1344.0 604.3h6M1407.7 392.2h6M1407.7 462.9h6M1407.7 533.6h6M1407.7 604.3h6M1471.4 392.2h6M1471.4 462.9h6M1471.4 533.6h6M1089.2 332.5h6M1407.7 336.7h6M1122.5 321.5h6" stroke="#9a9a9a" stroke-width=".8" stroke-dasharray="2 1" fill="none"/>
<path d="M1046.8 432.0h11.2M1052.3 426.4v11.2M1046.8 502.8h11.2M1052.3 497.1v11.2M1110.5 432.0h11.2M1116.1 426.4v11.2M1110.5 502.8h11.2M1116.1 497.1v11.2M1110.5 573.5h11.2M1116.1 567.9v11.2M1174.2 361.8h11.2M1179.8 356.1v11.2M1174.2 432.0h11.2M1179.8 426.4v11.2M1174.2 502.8h11.2M1179.8 497.1v11.2M1174.2 573.5h11.2M1179.8 567.9v11.2M1237.8 361.8h11.2M1243.4 356.1v11.2M1237.8 432.0h11.2M1243.4 426.4v11.2M1237.8 502.8h11.2M1243.4 497.1v11.2M1301.6 361.8h11.2M1307.2 356.1v11.2M1301.6 502.8h11.2M1307.2 497.1v11.2M1301.6 573.5h11.2M1307.2 567.9v11.2M1365.2 432.0h11.2M1370.8 426.4v11.2M1365.2 502.8h11.2M1370.8 497.1v11.2M1365.2 573.5h11.2M1370.8 567.9v11.2M1429.0 432.0h11.2M1434.6 426.4v11.2M1429.0 502.8h11.2M1434.6 497.1v11.2M1054.8 374.0h11.2M1060.4 368.4v11.2M1111.0 361.8h11.2M1116.6 356.2v11.2M1363.9 363.2h11.2M1369.5 357.6v11.2M1419.9 376.0h11.2M1425.5 370.4v11.2" stroke="#2424d8" stroke-width="1.7" fill="none"/>
<circle cx="1018.5" cy="401.7" r="4.4" fill="none" stroke="#3b8ada" stroke-width="1"/>
<circle cx="1468.9" cy="401.7" r="4.4" fill="none" stroke="#3b8ada" stroke-width="1"/>
<circle cx="1151.4" cy="326.0" r="4.4" fill="none" stroke="#3b8ada" stroke-width="1"/>
<circle cx="1335.0" cy="326.0" r="4.4" fill="none" stroke="#3b8ada" stroke-width="1"/>
<circle cx="1020.5" cy="293.5" r="4.9" fill="#fff" stroke="#2f80d6" stroke-width="1.5"/><text x="1020.5" y="295.3" font-family="Liberation Sans,sans-serif" font-size="5" fill="#444" text-anchor="middle">1</text>
<circle cx="1020.5" cy="641.5" r="4.9" fill="#fff" stroke="#2f80d6" stroke-width="1.5"/><text x="1020.5" y="643.3" font-family="Liberation Sans,sans-serif" font-size="5" fill="#444" text-anchor="middle">1</text>
<circle cx="1084.2" cy="293.5" r="4.9" fill="#fff" stroke="#2f80d6" stroke-width="1.5"/><text x="1084.2" y="295.3" font-family="Liberation Sans,sans-serif" font-size="5" fill="#444" text-anchor="middle">2</text>
<circle cx="1084.2" cy="641.5" r="4.9" fill="#fff" stroke="#2f80d6" stroke-width="1.5"/><text x="1084.2" y="643.3" font-family="Liberation Sans,sans-serif" font-size="5" fill="#444" text-anchor="middle">2</text>
<circle cx="1147.9" cy="293.5" r="4.9" fill="#fff" stroke="#2f80d6" stroke-width="1.5"/><text x="1147.9" y="295.3" font-family="Liberation Sans,sans-serif" font-size="5" fill="#444" text-anchor="middle">3</text>
<circle cx="1147.9" cy="641.5" r="4.9" fill="#fff" stroke="#2f80d6" stroke-width="1.5"/><text x="1147.9" y="643.3" font-family="Liberation Sans,sans-serif" font-size="5" fill="#444" text-anchor="middle">3</text>
<circle cx="1211.6" cy="293.5" r="4.9" fill="#fff" stroke="#2f80d6" stroke-width="1.5"/><text x="1211.6" y="295.3" font-family="Liberation Sans,sans-serif" font-size="5" fill="#444" text-anchor="middle">4</text>
<circle cx="1211.6" cy="641.5" r="4.9" fill="#fff" stroke="#2f80d6" stroke-width="1.5"/><text x="1211.6" y="643.3" font-family="Liberation Sans,sans-serif" font-size="5" fill="#444" text-anchor="middle">4</text>
<circle cx="1275.3" cy="293.5" r="4.9" fill="#fff" stroke="#2f80d6" stroke-width="1.5"/><text x="1275.3" y="295.3" font-family="Liberation Sans,sans-serif" font-size="5" fill="#444" text-anchor="middle">5</text>
<circle cx="1275.3" cy="641.5" r="4.9" fill="#fff" stroke="#2f80d6" stroke-width="1.5"/><text x="1275.3" y="643.3" font-family="Liberation Sans,sans-serif" font-size="5" fill="#444" text-anchor="middle">5</text>
<circle cx="1339.0" cy="293.5" r="4.9" fill="#fff" stroke="#2f80d6" stroke-width="1.5"/><text x="1339.0" y="295.3" font-family="Liberation Sans,sans-serif" font-size="5" fill="#444" text-anchor="middle">6</text>
<circle cx="1339.0" cy="641.5" r="4.9" fill="#fff" stroke="#2f80d6" stroke-width="1.5"/><text x="1339.0" y="643.3" font-family="Liberation Sans,sans-serif" font-size="5" fill="#444" text-anchor="middle">6</text>
<circle cx="1402.7" cy="293.5" r="4.9" fill="#fff" stroke="#2f80d6" stroke-width="1.5"/><text x="1402.7" y="295.3" font-family="Liberation Sans,sans-serif" font-size="5" fill="#444" text-anchor="middle">7</text>
<circle cx="1402.7" cy="641.5" r="4.9" fill="#fff" stroke="#2f80d6" stroke-width="1.5"/><text x="1402.7" y="643.3" font-family="Liberation Sans,sans-serif" font-size="5" fill="#444" text-anchor="middle">7</text>
<circle cx="1466.4" cy="293.5" r="4.9" fill="#fff" stroke="#2f80d6" stroke-width="1.5"/><text x="1466.4" y="295.3" font-family="Liberation Sans,sans-serif" font-size="5" fill="#444" text-anchor="middle">8</text>
<circle cx="1466.4" cy="641.5" r="4.9" fill="#fff" stroke="#2f80d6" stroke-width="1.5"/><text x="1466.4" y="643.3" font-family="Liberation Sans,sans-serif" font-size="5" fill="#444" text-anchor="middle">8</text>
<circle cx="987.0" cy="326.0" r="4.9" fill="#fff" stroke="#2f80d6" stroke-width="1.5"/><text x="987.0" y="327.8" font-family="Liberation Sans,sans-serif" font-size="5" fill="#444" text-anchor="middle">E</text>
<circle cx="1498.0" cy="326.0" r="4.9" fill="#fff" stroke="#2f80d6" stroke-width="1.5"/><text x="1498.0" y="327.8" font-family="Liberation Sans,sans-serif" font-size="5" fill="#444" text-anchor="middle">E</text>
<circle cx="987.0" cy="396.7" r="4.9" fill="#fff" stroke="#2f80d6" stroke-width="1.5"/><text x="987.0" y="398.5" font-family="Liberation Sans,sans-serif" font-size="5" fill="#444" text-anchor="middle">D</text>
<circle cx="1498.0" cy="396.7" r="4.9" fill="#fff" stroke="#2f80d6" stroke-width="1.5"/><text x="1498.0" y="398.5" font-family="Liberation Sans,sans-serif" font-size="5" fill="#444" text-anchor="middle">D</text>
<circle cx="987.0" cy="467.4" r="4.9" fill="#fff" stroke="#2f80d6" stroke-width="1.5"/><text x="987.0" y="469.2" font-family="Liberation Sans,sans-serif" font-size="5" fill="#444" text-anchor="middle">C</text>
<circle cx="1498.0" cy="467.4" r="4.9" fill="#fff" stroke="#2f80d6" stroke-width="1.5"/><text x="1498.0" y="469.2" font-family="Liberation Sans,sans-serif" font-size="5" fill="#444" text-anchor="middle">C</text>
<circle cx="987.0" cy="538.1" r="4.9" fill="#fff" stroke="#2f80d6" stroke-width="1.5"/><text x="987.0" y="539.9" font-family="Liberation Sans,sans-serif" font-size="5" fill="#444" text-anchor="middle">B</text>
<circle cx="1498.0" cy="538.1" r="4.9" fill="#fff" stroke="#2f80d6" stroke-width="1.5"/><text x="1498.0" y="539.9" font-family="Liberation Sans,sans-serif" font-size="5" fill="#444" text-anchor="middle">B</text>
<circle cx="987.0" cy="608.8" r="4.9" fill="#fff" stroke="#2f80d6" stroke-width="1.5"/><text x="987.0" y="610.6" font-family="Liberation Sans,sans-serif" font-size="5" fill="#444" text-anchor="middle">A</text>
<circle cx="1498.0" cy="608.8" r="4.9" fill="#fff" stroke="#2f80d6" stroke-width="1.5"/><text x="1498.0" y="610.6" font-family="Liberation Sans,sans-serif" font-size="5" fill="#444" text-anchor="middle">A</text>
</svg>
<!-- statusbar -->
<div class="a" style="left:0px;top:828px;width:1599px;height:29.2px;background:#0072c6;"></div>
<div class="a" style="left:899px;top:834px;width:311.5px;height:19px;background:#fff;border:1px solid #c6d6e8;"></div>
<span class="t" style="left:903px;top:838px;font-size:11px;color:#a9a9a9;">Enter Command...</span>
<div class="a" style="left:1193px;top:835px;width:16.5px;height:17px;background:#f0f0f0;border-left:1px solid #d0d0d0;"></div>
<svg style="left:1195px;top:837px" width="13" height="13" viewBox="0 0 13 13"><circle cx="7.6" cy="5.2" r="3.4" fill="none" stroke="#777" stroke-width="1.3"/><path d="M5.2 7.8L1.6 11.6" stroke="#777" stroke-width="1.7" stroke-linecap="round"/></svg>
<div class="a" style="left:1218px;top:835px;width:1.2px;height:17.5px;background:#d5e4f4;"></div>
<span class="t" style="left:1225.5px;top:837.5px;font-size:11px;color:#dfeaf7;">GE: mm , Anl: kN-m</span>
<span class="t" style="left:1334.5px;top:837.5px;font-size:11px;color:#dfeaf7;letter-spacing:0.22px;">X : 1.052E+06 , Y : -676349.71</span>
<span class="t" style="left:1508.5px;top:837.5px;font-size:11px;color:#dfeaf7;">Z : -6000.00 mm</span>
<!-- taskbar -->
<div class="a" style="left:0px;top:857px;width:1599px;height:42px;background:#dbdbdb;"></div>
<svg style="left:16px;top:869px" width="18" height="18" viewBox="0 0 18 18"><g fill="#111">
<path d="M0.4 2.8 L7.6 1.8 V8.5 H0.4Z"/><path d="M8.6 1.6 L17.4 0.4 V8.5 H8.6Z"/><path d="M0.4 9.5 H7.6 V16.2 L0.4 15.2Z"/><path d="M8.6 9.5 H17.4 V17.6 L8.6 16.4Z"/></g></svg>
<div class="a" style="left:51px;top:857.5px;width:297.5px;height:41.5px;background:#fff;"></div>
<svg style="left:61px;top:869px" width="20" height="20" viewBox="0 0 20 20"><circle cx="11.6" cy="7.6" r="5.4" fill="none" stroke="#333" stroke-width="1.5"/><path d="M7.8 11.6L1.8 17.8" stroke="#333" stroke-width="1.7"/></svg>
<span class="t" style="left:91.5px;top:869.5px;font-size:15.2px;color:#3c3c3c;letter-spacing:0.12px;">Type here to search</span>
<svg style="left:272px;top:862px" width="72" height="34" viewBox="0 0 72 34">
<path d="M27.5 4 Q29 13 38.5 15.5 Q29 18 27.5 28 Q26 18 16.5 15.5 Q26 13 27.5 4Z" fill="#f7b81c"/>
<path d="M51 13.4 Q51.8 18.4 56.6 19.6 Q51.8 20.8 51 25.8 Q50.2 20.8 45.4 19.6 Q50.2 18.4 51 13.4Z" fill="#f9c431"/>
<path d="M7.4 19.4 Q8 22.6 11 23.4 Q8 24.2 7.4 27.4 Q6.8 24.2 3.8 23.4 Q6.8 22.6 7.4 19.4Z" fill="#2a9be0"/>
<circle cx="44.6" cy="5.4" r="1.7" fill="#e0523a"/><circle cx="64" cy="25.4" r="1.6" fill="#8bc34a"/></svg>
<svg style="left:364px;top:868px" width="22" height="20" viewBox="0 0 22 20"><g fill="none" stroke="#222" stroke-width="1.4">
<rect x="2.6" y="5" width="10.8" height="9.4"/><path d="M1 1.6H15M1 18H15M17.8 1V7M17.8 12.4V19"/></g><rect x="16.6" y="8.2" width="2.4" height="3" fill="#222"/></svg>
<svg style="left:413.5px;top:865.5px" width="25" height="25" viewBox="-12.5 -12.5 25 25">
<circle r="12" fill="#fff"/>
<path d="M0 0 L-10.39 -6 A12 12 0 0 1 10.39 -6 Z" fill="#ea4335"/>
<path d="M0 0 L10.39 -6 A12 12 0 0 1 0 12 Z" fill="#fbc116"/>
<path d="M0 0 L0 12 A12 12 0 0 1 -10.39 -6 Z" fill="#2da94f"/>
<path d="M0 -6 H10.39 L5.2 3 Z" fill="#ea4335"/><path d="M5.2 3 L0 12 L-5.2 3Z" fill="#fbc116"/><path d="M-5.2 3 L-10.39 -6 L0 -6Z" fill="#2da94f"/>
<circle r="5.8" fill="#fff"/><circle r="4.6" fill="#4285f4"/></svg>
<svg style="left:460px;top:866px" width="27" height="24" viewBox="0 0 27 24">
<path d="M8 6 L17 1 L26 6 V19 Q26 21.4 23.6 21.4 H8Z" fill="#1a7fd6"/><path d="M8 6 L17 1 L26 6 L17 11.6Z" fill="#0b5cad"/>
<path d="M8 21.4 L26 9 V19 Q26 21.4 23.6 21.4Z" fill="#46c3f2"/><path d="M8 9.6 L24.8 21 Q24.4 21.4 23.6 21.4 H8Z" fill="#2aa5e8"/>
<rect x="0.6" y="6" width="13" height="13" rx="1.6" fill="#0f64b8"/><circle cx="7.1" cy="12.5" r="3.5" fill="none" stroke="#fff" stroke-width="1.9"/></svg>
<svg style="left:508px;top:865px" width="26" height="26" viewBox="0 0 26 26">
<path d="M8.4 6.4 V4 Q8.4 1.6 10.8 1.6 H15.2 Q17.6 1.6 17.6 4 V6.4" fill="none" stroke="#3b9be0" stroke-width="1.7"/>
<rect x="1" y="5.6" width="24" height="19.4" rx="2.4" fill="#12417e"/>
<rect x="8" y="10" width="4.6" height="4.6" fill="#f25022"/><rect x="13.4" y="10" width="4.6" height="4.6" fill="#7fba00"/><rect x="8" y="15.4" width="4.6" height="4.6" fill="#00a4ef"/><rect x="13.4" y="15.4" width="4.6" height="4.6" fill="#ffb900"/></svg>
<svg style="left:555.5px;top:866px" width="26" height="22" viewBox="0 0 26 22">
<path d="M1 2.6 Q1 1.4 2.2 1.4 H9 L11.6 4 H1Z" fill="#e9a820"/><rect x="1" y="3.6" width="23.6" height="16" rx="1" fill="#f8d466"/>
<path d="M1 8 H24.6 V19.6 H1Z" fill="#fbe08a"/><path d="M5.6 21.2 V13.4 H20.4 V21.2 H16.6 V17 H9.4 V21.2Z" fill="#2f86d0"/><rect x="5.6" y="13.4" width="14.8" height="2" fill="#5aa7e6"/></svg>
<svg style="left:603px;top:865px" width="27" height="26" viewBox="0 0 27 26"><defs>
<linearGradient id="cp1" x1="0" y1="0" x2="0" y2="1"><stop offset="0" stop-color="#2b7cf0"/><stop offset=".4" stop-color="#33b6d6"/><stop offset=".7" stop-color="#9ed45e"/><stop offset="1" stop-color="#f7c53a"/></linearGradient>
<linearGradient id="cp2" x1="0" y1="0" x2="0" y2="1"><stop offset="0" stop-color="#6a5cf2"/><stop offset=".4" stop-color="#c95ae0"/><stop offset=".75" stop-color="#f4607a"/><stop offset="1" stop-color="#f98a3a"/></linearGradient></defs>
<rect x="3.6" y="2.4" width="11.5" height="19" rx="5.4" fill="url(#cp1)" transform="rotate(14 9.3 12)"/>
<rect x="11.8" y="4.6" width="11.5" height="19" rx="5.4" fill="url(#cp2)" transform="rotate(14 17.5 14)"/>
<path d="M12.6 8.4 Q14.4 6.2 16 8 L13.2 18.4 Q11.4 20.2 10 18.6Z" fill="#fff" fill-opacity=".35"/></svg>
<svg style="left:650px;top:865px" width="26" height="26" viewBox="0 0 26 26"><defs>
<linearGradient id="ed1" x1="0" y1="0" x2="1" y2="0"><stop offset="0" stop-color="#34c2d8"/><stop offset="1" stop-color="#5ed870"/></linearGradient></defs>
<circle cx="13" cy="13" r="12" fill="#1b74c9"/><path d="M1.4 10.6 A12 12 0 0 1 25 12.6 Q25 17 20.6 17 H11.6 Q11.6 14.4 13 13.4 Q9 8.6 1.4 10.6Z" fill="url(#ed1)"/>
<path d="M11.6 17 Q12 21 17 21.4 Q20.6 21.4 23 19.4 Q20 25 13.6 25 Q8 24 7.2 18 Q7 13 11.4 11 Q10.6 14 11.6 17Z" fill="#0e4f9e"/>
<ellipse cx="16" cy="15.2" rx="4.6" ry="2.8" fill="#e2e2e2"/></svg>
<svg style="left:699px;top:866px" width="24" height="24" viewBox="0 0 24 24"><rect x="10" y="4.4" width="12.4" height="15.2" fill="#fff" stroke="#2f7d3b" stroke-width="1.1"/><rect x="15.6" y="7" width="4.6" height="3" fill="#2f7d3b"/><rect x="17" y="13.4" width="4" height="3" fill="#2f7d3b"/><path d="M17.8 10V12.6" stroke="#2f7d3b" stroke-width="1"/><path d="M1.4 4.4 L14 1.6 V22.4 L1.4 19.6Z" fill="#2f7d3b"/><text x="7.6" y="16.4" font-family="Liberation Sans,sans-serif" font-weight="bold" font-size="11.5" fill="#fff" text-anchor="middle">P</text></svg>
<svg style="left:745px;top:865px" width="27" height="27" viewBox="0 0 27 27"><defs><linearGradient id="rv" x1="0" y1="0" x2="1" y2="1"><stop offset="0" stop-color="#9ec9ee"/><stop offset=".6" stop-color="#2f82cc"/><stop offset="1" stop-color="#8fc0ea"/></linearGradient></defs>
<rect x="0.5" y="0.5" width="26" height="26" fill="url(#rv)"/><path d="M6 4 H13 V11 L17 4 H21 L16 12.6 L21.4 22 H15 L13 17 V22 H8Z" fill="#16335e"/></svg>
<svg style="left:794px;top:866px" width="24" height="24" viewBox="0 0 24 24"><rect x="10" y="6.4" width="12.6" height="10.6" fill="#fff" stroke="#0f6fc6" stroke-width="1.4"/><path d="M10.4 7L16.4 12L22.4 7" fill="none" stroke="#0f6fc6" stroke-width="1.3"/><path d="M1.4 4.4 L14 1.6 V22.4 L1.4 19.6Z" fill="#0f6fc6"/><text x="7.6" y="16.4" font-family="Liberation Sans,sans-serif" font-weight="bold" font-size="11.5" fill="#fff" text-anchor="middle">O</text></svg>
<svg style="left:841px;top:866px" width="24" height="24" viewBox="0 0 24 24"><rect x="10" y="4.4" width="12.4" height="15.2" fill="#fff" stroke="#d24a26" stroke-width="1.1"/><circle cx="17" cy="9.6" r="3" fill="#d24a26"/><path d="M13.4 14.4H21M13.4 16.6H21" stroke="#d24a26" stroke-width="1.1"/><path d="M1.4 4.4 L14 1.6 V22.4 L1.4 19.6Z" fill="#d24a26"/><text x="7.6" y="16.4" font-family="Liberation Sans,sans-serif" font-weight="bold" font-size="11.5" fill="#fff" text-anchor="middle">P</text></svg>
<svg style="left:888px;top:866px" width="24" height="24" viewBox="0 0 24 24"><rect x="10" y="4.4" width="12.4" height="15.2" fill="#fff" stroke="#2c5aa0" stroke-width="1.1"/><path d="M13.4 7.4H21M13.4 9.8H21M13.4 12.2H21M13.4 14.6H21M13.4 17H21" stroke="#2c5aa0" stroke-width="1.1"/><path d="M1.4 4.4 L14 1.6 V22.4 L1.4 19.6Z" fill="#2c5aa0"/><text x="7.6" y="16.4" font-family="Liberation Sans,sans-serif" font-weight="bold" font-size="11.5" fill="#fff" text-anchor="middle">W</text></svg>
<svg style="left:936px;top:866px" width="24" height="24" viewBox="0 0 24 24"><rect x="10" y="4.4" width="12.4" height="15.2" fill="#fff" stroke="#217346" stroke-width="1.1"/><path d="M13.4 7.4H21M13.4 9.8H21M13.4 12.2H21M13.4 14.6H21M13.4 17H21M17.4 5V19" stroke="#217346" stroke-width="1.1"/><path d="M1.4 4.4 L14 1.6 V22.4 L1.4 19.6Z" fill="#217346"/><text x="7.6" y="16.4" font-family="Liberation Sans,sans-serif" font-weight="bold" font-size="11.5" fill="#fff" text-anchor="middle">X</text></svg>
<div class="a" style="left:983px;top:865px;width:25px;height:25px;background:#f3e9e6;"></div>
<span class="t" style="left:995.5px;top:864px;font-size:27px;font-weight:bold;color:#c8272d;transform:translateX(-50%)">A</span>
<svg style="left:1029px;top:868px" width="25" height="19" viewBox="0 0 25 19"><rect x="0.4" y="0.6" width="24.2" height="17.8" rx="4.6" fill="#f00c0c"/><path d="M10 5.4 L16.4 9.5 L10 13.6Z" fill="#fff"/></svg>
<div class="a" style="left:1066px;top:857px;width:46.5px;height:42px;background:#f2f2f2;"></div>
<svg style="left:1076px;top:865px" width="25" height="26" viewBox="0 0 25 26">
<path d="M12.5 1 L23 7 V19.4 L12.5 25 L2 19.4 V7Z" fill="#9c1838"/><path d="M12.5 1 L23 7 L12.5 13 L2 7Z" fill="#b22a4a"/><path d="M12.5 13 V25 L2 19.4 V7Z" fill="#86102e"/>
<path d="M9.4 8.6 L16.6 13 L9.4 17.4Z" fill="#fff"/></svg>
<svg style="left:1122.5px;top:865.5px" width="25" height="25" viewBox="-12.5 -12.5 25 25">
<circle r="12" fill="#fff"/>
<path d="M0 0 L-10.39 -6 A12 12 0 0 1 10.39 -6 Z" fill="#ea4335"/>
<path d="M0 0 L10.39 -6 A12 12 0 0 1 0 12 Z" fill="#fbc116"/>
<path d="M0 0 L0 12 A12 12 0 0 1 -10.39 -6 Z" fill="#2da94f"/>
<path d="M0 -6 H10.39 L5.2 3 Z" fill="#ea4335"/><path d="M5.2 3 L0 12 L-5.2 3Z" fill="#fbc116"/><path d="M-5.2 3 L-10.39 -6 L0 -6Z" fill="#2da94f"/>
<circle r="5.8" fill="#fff"/><circle r="4.6" fill="#4285f4"/><circle cx="4" cy="6" r="6" fill="#c9c9c9" stroke="#8c8c8c" stroke-width=".8"/><circle cx="4" cy="4.6" r="2.2" fill="#f4f4f4"/><path d="M0 10 Q4 4.6 8 10Z" fill="#f4f4f4"/></svg>
<svg style="left:1169px;top:864px" width="27" height="28" viewBox="0 0 27 28">
<path d="M12 3 L26 1 L23 25 L12 27Z" fill="#8a9aa8"/><path d="M16 2.4 L20 2 L17 26 L13.6 26.6Z" fill="#c9d3dc"/>
<rect x="1" y="5" width="15" height="18" rx="1.6" fill="#1c7fd8"/><text x="8.5" y="19" font-family="Liberation Sans,sans-serif" font-weight="bold" font-size="14" fill="#fff" text-anchor="middle">E</text></svg>
<svg style="left:1216px;top:864px" width="24" height="27" viewBox="0 0 24 27">
<path d="M9.6 1.6 H14.4 L20 19 H4Z" fill="#f58a0c"/><path d="M7.9 7 H16.1 L17.5 11.4 H6.5Z" fill="#fff"/><path d="M5.6 14.6 H18.4 L19.4 17.8 H4.6Z" fill="#fff"/>
<path d="M2 19 H22 L23 25.4 H1Z" fill="#f07c00"/><path d="M3 20 H21 L21.4 22 H2.6Z" fill="#ffa63a"/></svg>
<div class="a" style="left:550px;top:896px;width:36.5px;height:3px;background:#1fb5c4;"></div>
<div class="a" style="left:1066px;top:896px;width:46.5px;height:3px;background:#1fb5c4;"></div>
<div class="a" style="left:1117.5px;top:896px;width:36.5px;height:3px;background:#1fb5c4;"></div>
<div class="a" style="left:1164.5px;top:896px;width:36.5px;height:3px;background:#1fb5c4;"></div>
<div class="a" style="left:1211.5px;top:896px;width:36.0px;height:3px;background:#1fb5c4;"></div>
<svg style="left:1277px;top:866px" width="30" height="24" viewBox="0 0 30 24">
<circle cx="19.4" cy="8.6" r="6.2" fill="#f6a823"/><path d="M7.4 21.6 Q1.6 21.6 1.6 16.8 Q1.6 12.6 6 12.2 Q7.6 7.4 12.6 7.8 Q17 8.2 18 12.4 Q23.6 12.2 23.6 17 Q23.6 21.6 18.6 21.6Z" fill="#d3dbea"/>
<path d="M7.4 21.6 Q1.6 21.6 1.6 16.8 Q3.4 20 9 19.6 H21 Q23 19.4 23.6 17 Q23.6 21.6 18.6 21.6Z" fill="#b5c2d8"/></svg>
<span class="t" style="left:1312px;top:871px;font-size:14px;color:#2a2a2a;">18°C</span>
<svg style="left:1371px;top:871px" width="18" height="12" viewBox="0 0 18 12"><path d="M2 10L9 2.6L16 10" fill="none" stroke="#222" stroke-width="1.5"/></svg>
<svg style="left:1403px;top:868px" width="22" height="21" viewBox="0 0 22 21"><rect x="2" y="1.6" width="15" height="12.4" fill="none" stroke="#333" stroke-width="1.3"/><path d="M6 11 L8 7 L11 9 L13.6 4.6" fill="none" stroke="#333" stroke-width="1.2"/><circle cx="16.4" cy="14.6" r="3.4" fill="#f39a1e"/><path d="M5 17H11" stroke="#333" stroke-width="1.2"/></svg>
<span class="t" style="left:1436.5px;top:872.5px;font-size:12px;color:#2a2a2a;letter-spacing:-0.3px;">ENG</span>
<span class="t" style="left:1505px;top:862px;font-size:12.6px;color:#2a2a2a;transform:translateX(-50%);">2:33 pm</span>
<span class="t" style="left:1505px;top:881px;font-size:12.6px;color:#2a2a2a;transform:translateX(-50%);">21/08/2025</span>
<svg style="left:1556px;top:869px" width="20" height="20" viewBox="0 0 20 20"><path d="M1 1 H19 V14.6 H12.6 L10 17.6 L7.4 14.6 H1Z" fill="#111"/><path d="M4.4 5H15.6M4.4 8H15.6M4.4 11H12" stroke="#dbdbdb" stroke-width="1.1"/></svg>
<div class="a" style="left:1594px;top:857px;width:1px;height:42px;background:#b8b8b8;"></div>
</div>
</body></html>
